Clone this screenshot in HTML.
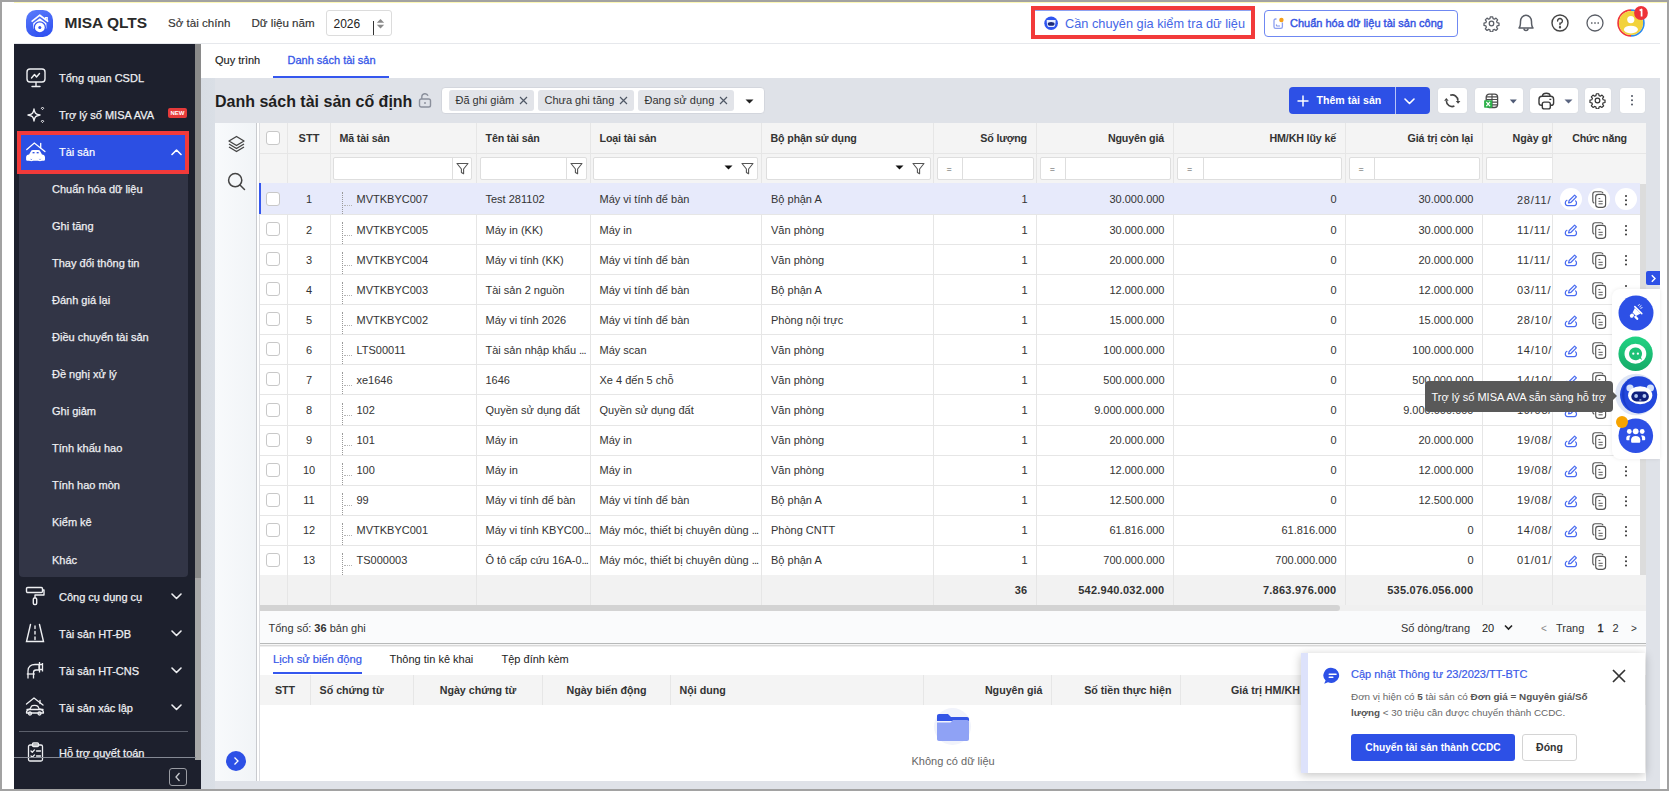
<!DOCTYPE html><html><head><meta charset="utf-8"><style>
*{box-sizing:border-box;margin:0;padding:0}
html,body{width:1669px;height:791px;overflow:hidden}
body{background:#a2a2a2;font-family:"Liberation Sans",sans-serif;font-size:11px;color:#333;position:relative}
.abs{position:absolute}
.t{position:absolute;white-space:nowrap;margin-top:1px}
svg{display:block}
</style></head><body>

<div class="abs" style="left:2px;top:2px;width:1665px;height:787px;background:#fff"></div>
<div class="abs" style="left:14px;top:2px;width:1653px;height:1px;background:#fcf7b5"></div>
<div class="abs" style="left:14px;top:43px;width:1646px;height:1px;background:#e6e8ec"></div>
<div class="abs" style="left:26px;top:10px;width:27px;height:27px;border-radius:10px;background:linear-gradient(160deg,#5a7cfb,#2b4cf0)">
<svg width="27" height="27" viewBox="0 0 27 27"><path d="M5.6 11.6 L13.8 5.2 L22.2 11.6" stroke="#fff" stroke-width="1.7" fill="none" stroke-linejoin="round"/><path d="M19.5 9.3 V7.6 H21.2 V10.8" stroke="#fff" stroke-width="1.3" fill="none"/>
<path d="M7.2 18.5 V13.2 L13.8 8.2 L20.4 13.2 V18.5 Z" fill="#fff"/><circle cx="13.8" cy="17.4" r="6.2" fill="#3453f2"/><circle cx="13.8" cy="17.4" r="4.9" fill="#fff"/><circle cx="13.8" cy="17.4" r="1.5" fill="#3453f2"/></svg></div>
<div class="t" style="left:64.5px;top:12.7px;font-size:15.5px;font-weight:700;color:#2a2a2a;line-height:18px">MISA QLTS</div>
<div class="t" style="left:168px;top:14px;font-size:11.6px;color:#333;line-height:16px;-webkit-text-stroke:0.15px #333">Sở tài chính</div>
<div class="t" style="left:251.5px;top:14px;font-size:11.6px;color:#333;line-height:16px;-webkit-text-stroke:0.15px #333">Dữ liệu năm</div>
<div class="abs" style="left:326px;top:10px;width:66px;height:26px;border:1px solid #dcdcdc;border-radius:3px"></div>
<div class="t" style="left:333.5px;top:15px;font-size:12px;color:#222;line-height:16px">2026</div>
<div class="abs" style="left:373px;top:21px;width:1px;height:14px;background:#333"></div>
<svg class="abs" style="left:375.5px;top:17.5px" width="9" height="12" viewBox="0 0 9 12"><path d="M0.8 4.8 L4.5 1 L8.2 4.8Z" fill="#8a8a8a"/><path d="M0.8 6.8 L4.5 10.6 L8.2 6.8Z" fill="#8a8a8a"/></svg>
<div class="abs" style="left:1031px;top:6px;width:224px;height:33px;border:4px solid #f23a3a"></div>
<div class="abs" style="left:1035px;top:10px;width:216px;height:1px;background:#8ea2f2"></div>
<svg class="abs" style="left:1043.5px;top:16px" width="15" height="15" viewBox="0 0 15 15"><circle cx="7.1" cy="7.3" r="6.8" fill="#2f55f0"/><path d="M2.7 3.9 H11.6 C11.6 6.6 11.4 10 9.9 10.9 H4.4 C2.9 10 2.7 6.6 2.7 3.9Z" fill="#e6eeff"/><ellipse cx="7.15" cy="7.9" rx="3.4" ry="1.95" fill="#1c2a78"/></svg>
<div class="t" style="left:1065px;top:15px;font-size:12.75px;color:#4667e6;line-height:16px">Cần chuyên gia kiểm tra dữ liệu</div>
<div class="abs" style="left:1264px;top:10px;width:194px;height:27px;border:1px solid #6f88f2;border-radius:4px"></div>
<svg class="abs" style="left:1273px;top:17px" width="12" height="13" viewBox="0 0 12 13"><path d="M3.5 2 H2.6 C1.6 2 1 2.7 1 3.7 V9.8 C1 10.8 1.6 11.4 2.6 11.4 H7.8 C8.8 11.4 9.4 10.8 9.4 9.8 V5.5" fill="none" stroke="#8c9ff0" stroke-width="1.3"/><path d="M3.4 7.4 V9 H7" stroke="#7f93ec" stroke-width="1" fill="none"/><circle cx="8.4" cy="3" r="2.2" fill="#f5a01a"/></svg>
<div class="t" style="left:1290px;top:15.4px;font-size:11px;color:#3453e2;line-height:14px;-webkit-text-stroke:0.4px #3453e2">Chuẩn hóa dữ liệu tài sản công</div>
<svg class="abs" style="left:1483px;top:14.7px" width="17" height="17" viewBox="0 0 24 24" fill="none" stroke="#5a5e66" stroke-width="1.75" stroke-linejoin="round"><path d="M10.3 2.5h3.4l.5 2.6 1.9.8 2.2-1.5 2.4 2.4-1.5 2.2.8 1.9 2.6.5v3.4l-2.6.5-.8 1.9 1.5 2.2-2.4 2.4-2.2-1.5-1.9.8-.5 2.6h-3.4l-.5-2.6-1.9-.8-2.2 1.5-2.4-2.4 1.5-2.2-.8-1.9-2.6-.5v-3.4l2.6-.5.8-1.9-1.5-2.2 2.4-2.4 2.2 1.5 1.9-.8z"/><circle cx="12" cy="12" r="3.2"/></svg>
<svg class="abs" style="left:1517px;top:13.3px" width="18" height="19" viewBox="0 0 18 19" fill="none" stroke="#5a5e66" stroke-width="1.5" stroke-linejoin="round"><path d="M2 15 C3.5 13.5 3.5 12 3.5 8.5 C3.5 4.8 6 2.2 9 2.2 C12 2.2 14.5 4.8 14.5 8.5 C14.5 12 14.5 13.5 16 15 Z"/><path d="M7 15.5 A2 2 0 0 0 11 15.5"/></svg>
<svg class="abs" style="left:1551px;top:14.2px" width="18" height="18" viewBox="0 0 18 18" fill="none" stroke="#444" stroke-width="1.4"><circle cx="9" cy="9" r="8"/><path d="M6.6 7 A2.4 2.4 0 1 1 9 9.3 L9 10.8" stroke-linecap="round"/><circle cx="9" cy="13.2" r="0.5" fill="#444"/></svg>
<svg class="abs" style="left:1585.5px;top:14.2px" width="18" height="18" viewBox="0 0 18 18" fill="none" stroke="#5a5e66" stroke-width="1.3"><circle cx="9" cy="9" r="8"/><circle cx="5.8" cy="9" r="0.5" fill="#5a5e66" stroke-width="0.8"/><circle cx="9" cy="9" r="0.5" fill="#5a5e66" stroke-width="0.8"/><circle cx="12.2" cy="9" r="0.5" fill="#5a5e66" stroke-width="0.8"/></svg>
<svg class="abs" style="left:1615.7px;top:8.3px" width="30" height="30" viewBox="0 0 30 30"><path d="M15 2.1 A12.9 12.9 0 0 0 15 27.9" stroke="#f0353b" stroke-width="1.7" fill="none"/><path d="M15 2.1 A12.9 12.9 0 0 1 15 27.9" stroke="#2b8af0" stroke-width="1.7" fill="none"/><circle cx="15" cy="15" r="12.1" fill="#f2d23c"/><circle cx="14.8" cy="11.6" r="3.6" fill="#fff"/><ellipse cx="14.9" cy="21.6" rx="7" ry="3.9" fill="#fff"/></svg>
<svg class="abs" style="left:1634.2px;top:6px" width="14" height="14" viewBox="0 0 14 14"><circle cx="7" cy="7" r="6.9" fill="#ee3238"/><path d="M5.6 4.6 L7.6 3.5 V10.6" stroke="#fff" stroke-width="1.7" fill="none" stroke-linejoin="round"/></svg>
<div class="abs" style="left:14px;top:44px;width:187px;height:745px;background:#1d202d"></div>
<div class="abs" style="left:195px;top:44px;width:6px;height:534px;background:#8a8a8a"></div>
<div class="abs" style="left:195px;top:578px;width:6px;height:182px;background:#a9a9a9"></div>
<div class="abs" style="left:19px;top:170px;width:169px;height:407px;background:#323546;border-radius:0 0 4px 4px"></div>
<div class="abs" style="left:17px;top:131px;width:172px;height:43px;border:4px solid #f23a3a;background:#2c4fe3"></div>
<svg class="abs" style="left:26px;top:68px" width="20" height="20" viewBox="0 0 20 20" fill="none" stroke="#eeeff2" stroke-width="1.4" stroke-linecap="round" stroke-linejoin="round"><rect x="1" y="1" width="18" height="13" rx="3"/><path d="M5.5 10 L8.5 6.5 L10.5 9 L13.5 5.5"/><path d="M10 14.5 V18 M6 18.5 H14"/></svg>
<div class="t" style="left:59px;top:70px;font-size:11px;color:#eeeff2;line-height:15px;-webkit-text-stroke:0.25px #eeeff2">Tổng quan CSDL</div>
<svg class="abs" style="left:26px;top:105px" width="20" height="20" viewBox="0 0 20 20" fill="none" stroke="#eeeff2" stroke-width="1.4" stroke-linejoin="round"><path d="M8 4 C8.6 8 9.5 9.2 14 10 C9.5 10.8 8.6 12 8 16 C7.4 12 6.5 10.8 2 10 C6.5 9.2 7.4 8 8 4Z"/><path d="M16.5 2 l1.2 1.3 -1.2 1.3 -1.2 -1.3z" stroke-width="1"/><path d="M16.5 15 l1.2 1.3 -1.2 1.3 -1.2 -1.3z" stroke-width="1"/></svg>
<div class="t" style="left:59px;top:107px;font-size:11px;color:#eeeff2;line-height:15px;-webkit-text-stroke:0.25px #eeeff2">Trợ lý số MISA AVA</div>
<div class="abs" style="left:168px;top:108px;width:19px;height:10px;background:#e53a3a;border-radius:2px;color:#fff;font-size:6px;font-weight:700;text-align:center;line-height:10px">NEW</div>
<svg class="abs" style="left:26px;top:142px" width="20" height="20" viewBox="0 0 20 20" fill="none" stroke="#fff" stroke-width="1.3" stroke-linecap="round"><path d="M0.8 7.5 L8.3 1 L18.9 9.6"/><path d="M14.7 1.4 V5.8"/><path d="M1 18.7 C0.4 18.7 0.1 18.1 0.1 17.3 V15.2 C0.1 13.4 1.3 12.6 3.1 12.4 L4.9 9.3 C5.4 8.5 6.1 8.1 7.1 8.1 H12 C13 8.1 13.7 8.5 14.2 9.3 L16 12.4 C17.8 12.6 19 13.4 19 15.2 V17.3 C19 18.1 18.7 18.7 18.1 18.7 Z" fill="#fff" stroke="none"/><rect x="5.9" y="9.4" width="3.3" height="2.6" fill="#2c4fe3"/><rect x="10" y="9.4" width="3.3" height="2.6" fill="#2c4fe3"/><ellipse cx="5.3" cy="17.6" rx="1.5" ry="1" fill="#2c4fe3"/><ellipse cx="14" cy="17.6" rx="1.5" ry="1" fill="#2c4fe3"/></svg>
<div class="t" style="left:59px;top:144px;font-size:11px;color:#fff;line-height:15px;-webkit-text-stroke:0.2px #fff">Tài sản</div>
<svg class="abs" style="left:170.5px;top:148.5px" width="11" height="7" viewBox="0 0 11 7"><path d="M1 5.5 L5.5 1 L10 5.5" fill="none" stroke="#fff" stroke-width="1.6" stroke-linecap="round" stroke-linejoin="round"/></svg>
<div class="t" style="left:52px;top:180.5px;font-size:11px;color:#eeeff2;line-height:15px;-webkit-text-stroke:0.25px #eeeff2">Chuẩn hóa dữ liệu</div>
<div class="t" style="left:52px;top:217.6px;font-size:11px;color:#eeeff2;line-height:15px;-webkit-text-stroke:0.25px #eeeff2">Ghi tăng</div>
<div class="t" style="left:52px;top:254.7px;font-size:11px;color:#eeeff2;line-height:15px;-webkit-text-stroke:0.25px #eeeff2">Thay đổi thông tin</div>
<div class="t" style="left:52px;top:291.8px;font-size:11px;color:#eeeff2;line-height:15px;-webkit-text-stroke:0.25px #eeeff2">Đánh giá lại</div>
<div class="t" style="left:52px;top:328.9px;font-size:11px;color:#eeeff2;line-height:15px;-webkit-text-stroke:0.25px #eeeff2">Điều chuyển tài sản</div>
<div class="t" style="left:52px;top:366.0px;font-size:11px;color:#eeeff2;line-height:15px;-webkit-text-stroke:0.25px #eeeff2">Đề nghị xử lý</div>
<div class="t" style="left:52px;top:403.1px;font-size:11px;color:#eeeff2;line-height:15px;-webkit-text-stroke:0.25px #eeeff2">Ghi giảm</div>
<div class="t" style="left:52px;top:440.2px;font-size:11px;color:#eeeff2;line-height:15px;-webkit-text-stroke:0.25px #eeeff2">Tính khấu hao</div>
<div class="t" style="left:52px;top:477.3px;font-size:11px;color:#eeeff2;line-height:15px;-webkit-text-stroke:0.25px #eeeff2">Tính hao mòn</div>
<div class="t" style="left:52px;top:514.4px;font-size:11px;color:#eeeff2;line-height:15px;-webkit-text-stroke:0.25px #eeeff2">Kiểm kê</div>
<div class="t" style="left:52px;top:551.5px;font-size:11px;color:#eeeff2;line-height:15px;-webkit-text-stroke:0.25px #eeeff2">Khác</div>
<svg class="abs" style="left:25px;top:586px" width="20" height="20" viewBox="0 0 20 20" fill="none" stroke="#eeeff2" stroke-width="1.4" stroke-linejoin="round"><rect x="1.5" y="1.5" width="16" height="5" rx="1.2"/><path d="M17.5 4 H19 V9 H10 V12"/><rect x="8.3" y="12" width="3.4" height="6.5" rx="1.2"/></svg>
<div class="t" style="left:59px;top:588.5px;font-size:11px;color:#eeeff2;line-height:15px;-webkit-text-stroke:0.25px #eeeff2">Công cụ dụng cụ</div>
<svg class="abs" style="left:170.5px;top:593px" width="11" height="7" viewBox="0 0 11 7"><path d="M1 1 L5.5 5.5 L10 1" fill="none" stroke="#eeeff2" stroke-width="1.6" stroke-linecap="round" stroke-linejoin="round"/></svg>
<svg class="abs" style="left:25px;top:623px" width="20" height="20" viewBox="0 0 20 20" fill="none" stroke="#eeeff2" stroke-width="1.4" stroke-linecap="round"><path d="M5.5 1.5 L1.5 18.5 H18.5 L14.5 1.5"/><path d="M10 3 V5.5 M10 8.5 V11 M10 14 V16.5"/></svg>
<div class="t" style="left:59px;top:625.5px;font-size:11px;color:#eeeff2;line-height:15px;-webkit-text-stroke:0.25px #eeeff2">Tài sản HT-ĐB</div>
<svg class="abs" style="left:170.5px;top:630px" width="11" height="7" viewBox="0 0 11 7"><path d="M1 1 L5.5 5.5 L10 1" fill="none" stroke="#eeeff2" stroke-width="1.6" stroke-linecap="round" stroke-linejoin="round"/></svg>
<svg class="abs" style="left:25px;top:660px" width="20" height="20" viewBox="0 0 20 20" fill="none" stroke="#eeeff2" stroke-width="1.3" stroke-linejoin="round"><path d="M3 18.5 V11 C3 6.5 6 4.5 10 4.5 H14 V10 H11 C9.5 10 8.5 11 8.5 12.5 V18.5"/><path d="M14.5 2 V12.5 M17.5 3 V11.5 M14.5 4.5 H17.5 M14.5 9.5 H17.5"/><path d="M1.8 14 H9.8"/></svg>
<div class="t" style="left:59px;top:662.5px;font-size:11px;color:#eeeff2;line-height:15px;-webkit-text-stroke:0.25px #eeeff2">Tài sản HT-CNS</div>
<svg class="abs" style="left:170.5px;top:667px" width="11" height="7" viewBox="0 0 11 7"><path d="M1 1 L5.5 5.5 L10 1" fill="none" stroke="#eeeff2" stroke-width="1.6" stroke-linecap="round" stroke-linejoin="round"/></svg>
<svg class="abs" style="left:25px;top:697px" width="20" height="20" viewBox="0 0 20 20" fill="none" stroke="#eeeff2" stroke-width="1.3" stroke-linecap="round" stroke-linejoin="round"><path d="M1.5 7 L9 1 L18 8"/><path d="M15 3.5 V6.5"/><path d="M1.5 16 C1.3 13.5 3 12.5 5 12 L6.5 9.2 C7 8.5 8 8.3 9.5 8.3 C11 8.3 12.2 8.5 13 9.5 L14.2 12 C17 12.3 18.5 13.5 18.5 16 Z"/><circle cx="5" cy="16.5" r="1.5"/><circle cx="14.5" cy="16.5" r="1.5"/><path d="M2 12.5 H18"/></svg>
<div class="t" style="left:59px;top:699.5px;font-size:11px;color:#eeeff2;line-height:15px;-webkit-text-stroke:0.25px #eeeff2">Tài sản xác lập</div>
<svg class="abs" style="left:170.5px;top:704px" width="11" height="7" viewBox="0 0 11 7"><path d="M1 1 L5.5 5.5 L10 1" fill="none" stroke="#eeeff2" stroke-width="1.6" stroke-linecap="round" stroke-linejoin="round"/></svg>
<div class="abs" style="left:19px;top:731px;width:169px;height:1px;background:#5b5f6b"></div>
<svg class="abs" style="left:25.5px;top:742px" width="20" height="20" viewBox="0 0 20 20" fill="none" stroke="#eeeff2" stroke-width="1.3" stroke-linecap="round" stroke-linejoin="round"><rect x="2.5" y="3" width="14" height="16" rx="1.5"/><rect x="6.5" y="1" width="6" height="3.5" rx="1"/><path d="M5 9 l1.3 1.3 2.2-2.4 M10.5 9 H14.5 M5 14 l1.3 1.3 2.2-2.4 M10.5 14 H14.5"/></svg>
<div class="t" style="left:59px;top:744.5px;font-size:11px;color:#eeeff2;line-height:15px;-webkit-text-stroke:0.25px #eeeff2">Hỗ trợ quyết toán</div>
<div class="abs" style="left:14px;top:757px;width:182px;height:1px;background:#858994"></div>
<div class="abs" style="left:169px;top:768px;width:18px;height:18px;border:1px solid #9a9ca3;border-radius:3px"></div>
<svg class="abs" style="left:174px;top:772px" width="8" height="10" viewBox="0 0 8 10"><path d="M5.5 1 L2 5 L5.5 9" fill="none" stroke="#c8c9ce" stroke-width="1.3"/></svg>
<div class="abs" style="left:201px;top:78px;width:1459px;height:711px;background:#dfe2e8"></div>
<div class="abs" style="left:201px;top:78px;width:14px;height:711px;background:linear-gradient(90deg,#d8dde4,#dadfe6)"></div>
<div class="t" style="left:215px;top:52px;font-size:11px;color:#222;line-height:15px;-webkit-text-stroke:0.15px #222">Quy trình</div>
<div class="t" style="left:287.5px;top:52px;font-size:11px;color:#3656e8;line-height:15px;-webkit-text-stroke:0.3px #3656e8">Danh sách tài sản</div>
<div class="abs" style="left:273px;top:76px;width:116px;height:2px;background:#3557ee"></div>
<div class="t" style="left:215px;top:91px;font-size:16px;font-weight:700;color:#1f1f1f;line-height:19px">Danh sách tài sản cố định</div>
<svg class="abs" style="left:418px;top:92px" width="14" height="16" viewBox="0 0 14 16" fill="none" stroke="#8b909c" stroke-width="1.4"><rect x="1.5" y="7" width="11" height="8" rx="1.8"/><path d="M3.8 7 V4.8 A3.2 3.2 0 0 1 10 3.8"/><path d="M7 10 V12"/></svg>
<div class="abs" style="left:441px;top:87px;width:324px;height:27px;background:#fff;border:1px solid #d3d6dd;border-radius:4px"></div>
<div class="abs" style="left:449px;top:90px;width:85px;height:21px;background:#e2e4e9;border-radius:3px"></div>
<div class="t" style="left:455.5px;top:92px;font-size:11px;color:#333;line-height:15px">Đã ghi giảm</div>
<svg class="abs" style="left:518.7px;top:96px" width="9" height="9" viewBox="0 0 9 9"><path d="M1 1 L8 8 M8 1 L1 8" stroke="#505866" stroke-width="1.2"/></svg>
<div class="abs" style="left:538px;top:90px;width:96px;height:21px;background:#e2e4e9;border-radius:3px"></div>
<div class="t" style="left:544.5px;top:92px;font-size:11px;color:#333;line-height:15px">Chưa ghi tăng</div>
<svg class="abs" style="left:618.7px;top:96px" width="9" height="9" viewBox="0 0 9 9"><path d="M1 1 L8 8 M8 1 L1 8" stroke="#505866" stroke-width="1.2"/></svg>
<div class="abs" style="left:638px;top:90px;width:96px;height:21px;background:#e2e4e9;border-radius:3px"></div>
<div class="t" style="left:644.5px;top:92px;font-size:11px;color:#333;line-height:15px">Đang sử dụng</div>
<svg class="abs" style="left:718.7px;top:96px" width="9" height="9" viewBox="0 0 9 9"><path d="M1 1 L8 8 M8 1 L1 8" stroke="#505866" stroke-width="1.2"/></svg>
<svg class="abs" style="left:744.5px;top:99px" width="9" height="5" viewBox="0 0 9 5"><path d="M0.5 0.5 H8.5 L4.5 4.5Z" fill="#222"/></svg>
<div class="abs" style="left:1289px;top:87px;width:141px;height:27px;background:#2d50e6;border-radius:4px"></div>
<div class="abs" style="left:1395px;top:87px;width:1px;height:27px;background:#b8c4f7"></div>
<svg class="abs" style="left:1297px;top:94.5px" width="12" height="12" viewBox="0 0 12 12"><path d="M6 0.5 V11.5 M0.5 6 H11.5" stroke="#fff" stroke-width="1.5"/></svg>
<div class="t" style="left:1316.5px;top:92px;font-size:10.6px;font-weight:700;color:#fff;line-height:15px">Thêm tài sản</div>
<svg class="abs" style="left:1403.5px;top:98px" width="11" height="7" viewBox="0 0 11 7"><path d="M1 1 L5.5 5.5 L10 1" fill="none" stroke="#fff" stroke-width="1.6" stroke-linecap="round" stroke-linejoin="round"/></svg>
<div class="abs" style="left:1438px;top:88px;width:29px;height:25px;background:#fff;border-radius:3px;box-shadow:0 0 1px rgba(0,0,0,0.12)"></div>
<div class="abs" style="left:1475px;top:88px;width:48px;height:25px;background:#fff;border-radius:3px;box-shadow:0 0 1px rgba(0,0,0,0.12)"></div>
<div class="abs" style="left:1530px;top:88px;width:48px;height:25px;background:#fff;border-radius:3px;box-shadow:0 0 1px rgba(0,0,0,0.12)"></div>
<div class="abs" style="left:1585px;top:88px;width:26px;height:25px;background:#fff;border-radius:3px;box-shadow:0 0 1px rgba(0,0,0,0.12)"></div>
<div class="abs" style="left:1620px;top:88px;width:25px;height:25px;background:#fff;border-radius:3px;box-shadow:0 0 1px rgba(0,0,0,0.12)"></div>
<svg class="abs" style="left:1441px;top:91px" width="22" height="20" viewBox="0 0 22 20" fill="none" stroke="#444" stroke-width="1.6"><path d="M9.2 4.3 A5.7 5.7 0 0 1 16.9 9.8"/><path d="M14.8 10 H19.4 L17.1 12.8Z" fill="#444" stroke="none"/><path d="M13.4 15.1 A5.7 5.7 0 0 1 5.4 9.9"/><path d="M3.1 9.8 H7.6 L5.35 7Z" fill="#444" stroke="none"/></svg>
<svg class="abs" style="left:1483px;top:93px" width="16" height="16" viewBox="0 0 16 16"><rect x="3.2" y="1.1" width="11.4" height="13.4" rx="3" fill="none" stroke="#4a4a4a" stroke-width="1.3"/><path d="M3.2 3.9 H14.6 M3.2 6.5 H14.6 M3.2 9.1 H14.6 M3.2 11.9 H14.6 M9 1.1 V14.5" stroke="#4a4a4a" stroke-width="1.1"/><rect x="1.1" y="7.2" width="8.1" height="7.5" rx="0.6" fill="#2db24a"/><path d="M3.3 8.8 L7 13.2 M7 8.8 L3.3 13.2" stroke="#fff" stroke-width="1.2"/></svg>
<svg class="abs" style="left:1508.6px;top:98.6px" width="9" height="5" viewBox="0 0 9 5"><path d="M0.8 0.6 H7.8 L4.3 4.4Z" fill="#4f5a75"/></svg>
<svg class="abs" style="left:1537.5px;top:92px" width="17" height="18" viewBox="0 0 17 18" fill="none" stroke="#3a3a3a" stroke-width="1.4" stroke-linejoin="round"><path d="M4.6 4.2 V3.6 C4.6 2 5.8 1.2 8.3 1.2 C10.8 1.2 12 2 12 3.6 V4.2"/><path d="M4 13.3 H3.4 C1.7 13.3 1 12.5 1 10.9 V7.3 C1 5.3 2 4.3 4 4.3 H12.6 C14.6 4.3 15.6 5.3 15.6 7.3 V10.9 C15.6 12.5 14.9 13.3 13.2 13.3 H12.6"/><rect x="4.3" y="10.1" width="8" height="6.8" rx="2" fill="#fff"/><path d="M11.4 7.4 H13.3" stroke-width="1.3"/></svg>
<svg class="abs" style="left:1563.5px;top:98.5px" width="9" height="5" viewBox="0 0 9 5"><path d="M0.5 0.5 H8.5 L4.5 4.5Z" fill="#5a6580"/></svg>
<svg class="abs" style="left:1589px;top:92px" width="17" height="17" viewBox="0 0 24 24" fill="none" stroke="#333" stroke-width="1.7" stroke-linejoin="round"><path d="M10.3 2.5h3.4l.5 2.6 1.9.8 2.2-1.5 2.4 2.4-1.5 2.2.8 1.9 2.6.5v3.4l-2.6.5-.8 1.9 1.5 2.2-2.4 2.4-2.2-1.5-1.9.8-.5 2.6h-3.4l-.5-2.6-1.9-.8-2.2 1.5-2.4-2.4 1.5-2.2-.8-1.9-2.6-.5v-3.4l2.6-.5.8-1.9-1.5-2.2 2.4-2.4 2.2 1.5 1.9-.8z"/><circle cx="12" cy="12" r="3.3"/></svg>
<svg class="abs" style="left:1630.4px;top:94.4px" width="4" height="13" viewBox="0 0 4 13" fill="#4d5360"><circle cx="2" cy="2" r="1"/><circle cx="2" cy="6.3" r="1"/><circle cx="2" cy="10.6" r="1"/></svg>
<div class="abs" style="left:215px;top:123px;width:1431px;height:658px;background:#fff"></div>
<div class="abs" style="left:215px;top:123px;width:41px;height:658px;background:linear-gradient(90deg,#f8fafc,#f1f4f7)"></div>
<div class="abs" style="left:256px;top:123px;width:1px;height:522px;background:#c9cbcf"></div>
<div class="abs" style="left:259px;top:123px;width:1px;height:522px;background:#dcdde0"></div>
<div class="abs" style="left:256px;top:645px;width:1px;height:136px;background:#c9cbcf"></div>
<div class="abs" style="left:259px;top:645px;width:1px;height:136px;background:#dcdde0"></div>
<svg class="abs" style="left:227px;top:135px" width="19" height="19" viewBox="0 0 19 19" fill="none" stroke="#444" stroke-width="1.4" stroke-linejoin="round"><path d="M9.5 1.5 L17 6 L9.5 10.5 L2 6Z"/><path d="M2 9 L9.5 13.5 L17 9"/><path d="M2 12 L9.5 16.5 L17 12"/></svg>
<svg class="abs" style="left:227px;top:172px" width="19" height="19" viewBox="0 0 19 19" fill="none" stroke="#444" stroke-width="1.5" stroke-linecap="round"><circle cx="8.2" cy="8.2" r="6.6"/><path d="M13 13 L17.5 17.5"/></svg>
<div class="abs" style="left:260px;top:123px;width:1386px;height:61px;background:#f4f4f4"></div>
<div class="abs" style="left:260px;top:153px;width:1386px;height:1px;background:#e6e6e6"></div>
<div class="abs" style="left:287px;top:123px;width:1px;height:482px;background:#e6e6e6"></div>
<div class="abs" style="left:266px;top:131px;width:14px;height:14px;border:1px solid #c8c8c8;border-radius:3px;background:#fff"></div>
<div class="abs" style="left:330px;top:123px;width:1px;height:482px;background:#e6e6e6"></div>
<div class="t" style="left:288px;width:42px;top:130px;text-align:center;font-size:11px;font-weight:700;color:#333;line-height:15px">STT</div>
<div class="abs" style="left:476px;top:123px;width:1px;height:482px;background:#e6e6e6"></div>
<div class="t" style="left:339.5px;top:130px;font-size:10.7px;font-weight:700;color:#333;line-height:15px;letter-spacing:-0.15px">Mã tài sản</div>
<div class="abs" style="left:590px;top:123px;width:1px;height:482px;background:#e6e6e6"></div>
<div class="t" style="left:485.5px;top:130px;font-size:10.7px;font-weight:700;color:#333;line-height:15px;letter-spacing:-0.15px">Tên tài sản</div>
<div class="abs" style="left:761px;top:123px;width:1px;height:482px;background:#e6e6e6"></div>
<div class="t" style="left:599.5px;top:130px;font-size:10.7px;font-weight:700;color:#333;line-height:15px;letter-spacing:-0.15px">Loại tài sản</div>
<div class="abs" style="left:933px;top:123px;width:1px;height:482px;background:#e6e6e6"></div>
<div class="t" style="left:770.5px;top:130px;font-size:10.7px;font-weight:700;color:#333;line-height:15px;letter-spacing:-0.15px">Bộ phận sử dụng</div>
<div class="abs" style="left:1036px;top:123px;width:1px;height:482px;background:#e6e6e6"></div>
<div class="t" style="left:934px;width:93px;top:130px;text-align:right;font-size:10.7px;font-weight:700;color:#333;line-height:15px;letter-spacing:-0.15px">Số lượng</div>
<div class="abs" style="left:1173px;top:123px;width:1px;height:482px;background:#e6e6e6"></div>
<div class="t" style="left:1037px;width:127px;top:130px;text-align:right;font-size:10.7px;font-weight:700;color:#333;line-height:15px;letter-spacing:-0.15px">Nguyên giá</div>
<div class="abs" style="left:1345px;top:123px;width:1px;height:482px;background:#e6e6e6"></div>
<div class="t" style="left:1174px;width:162px;top:130px;text-align:right;font-size:10.7px;font-weight:700;color:#333;line-height:15px;letter-spacing:-0.15px">HM/KH lũy kế</div>
<div class="abs" style="left:1482px;top:123px;width:1px;height:482px;background:#e6e6e6"></div>
<div class="t" style="left:1346px;width:127px;top:130px;text-align:right;font-size:10.7px;font-weight:700;color:#333;line-height:15px;letter-spacing:-0.15px">Giá trị còn lại</div>
<div class="abs" style="left:1552px;top:123px;width:1px;height:482px;background:#e6e6e6"></div>
<div class="abs" style="left:1483px;top:123px;width:69px;height:30px;overflow:hidden"><div class="t" style="left:29.5px;top:7px;font-size:10.7px;font-weight:700;color:#333;line-height:15px">Ngày ghi tăng</div></div>
<div class="abs" style="left:1552px;top:123px;width:1px;height:482px;background:#e6e6e6"></div>
<div class="t" style="left:1553px;width:93px;top:130px;text-align:center;font-size:10.7px;font-weight:700;color:#333;line-height:15px;letter-spacing:-0.2px">Chức năng</div>
<div class="abs" style="left:333px;top:157px;width:139px;height:23px;background:#fff;border:1px solid #dedede;border-radius:2px"></div>
<div class="abs" style="left:452px;top:157px;width:1px;height:23px;background:#dedede"></div>
<svg class="abs" style="left:456px;top:162px" width="13" height="13" viewBox="0 0 13 13"><path d="M1 1.5 H12 L7.6 7 V11.8 L5.4 10.5 V7Z" fill="none" stroke="#555" stroke-width="1.1" stroke-linejoin="round"/></svg>
<div class="abs" style="left:479.5px;top:157px;width:107px;height:23px;background:#fff;border:1px solid #dedede;border-radius:2px"></div>
<div class="abs" style="left:566px;top:157px;width:1px;height:23px;background:#dedede"></div>
<svg class="abs" style="left:570px;top:162px" width="13" height="13" viewBox="0 0 13 13"><path d="M1 1.5 H12 L7.6 7 V11.8 L5.4 10.5 V7Z" fill="none" stroke="#555" stroke-width="1.1" stroke-linejoin="round"/></svg>
<div class="abs" style="left:593px;top:157px;width:165px;height:23px;background:#fff;border:1px solid #dedede;border-radius:2px"></div>
<svg class="abs" style="left:723.5px;top:164.5px" width="9" height="5" viewBox="0 0 9 5"><path d="M0.5 0.5 H8.5 L4.5 4.5Z" fill="#111"/></svg>
<svg class="abs" style="left:740.5px;top:162px" width="13" height="13" viewBox="0 0 13 13"><path d="M1 1.5 H12 L7.6 7 V11.8 L5.4 10.5 V7Z" fill="none" stroke="#555" stroke-width="1.1" stroke-linejoin="round"/></svg>
<div class="abs" style="left:765.5px;top:157px;width:165px;height:23px;background:#fff;border:1px solid #dedede;border-radius:2px"></div>
<svg class="abs" style="left:895px;top:164.5px" width="9" height="5" viewBox="0 0 9 5"><path d="M0.5 0.5 H8.5 L4.5 4.5Z" fill="#111"/></svg>
<svg class="abs" style="left:912px;top:162px" width="13" height="13" viewBox="0 0 13 13"><path d="M1 1.5 H12 L7.6 7 V11.8 L5.4 10.5 V7Z" fill="none" stroke="#555" stroke-width="1.1" stroke-linejoin="round"/></svg>
<div class="abs" style="left:936.5px;top:157px;width:97px;height:23px;background:#fff;border:1px solid #dedede;border-radius:2px"></div>
<div class="abs" style="left:962px;top:157px;width:1px;height:23px;background:#dedede"></div>
<div class="t" style="left:936.5px;width:25.5px;top:161px;text-align:center;font-size:9px;color:#555;line-height:14px">=</div>
<div class="abs" style="left:1040px;top:157px;width:131px;height:23px;background:#fff;border:1px solid #dedede;border-radius:2px"></div>
<div class="abs" style="left:1065px;top:157px;width:1px;height:23px;background:#dedede"></div>
<div class="t" style="left:1040px;width:25px;top:161px;text-align:center;font-size:9px;color:#555;line-height:14px">=</div>
<div class="abs" style="left:1177px;top:157px;width:165px;height:23px;background:#fff;border:1px solid #dedede;border-radius:2px"></div>
<div class="abs" style="left:1202.5px;top:157px;width:1px;height:23px;background:#dedede"></div>
<div class="t" style="left:1177px;width:25.5px;top:161px;text-align:center;font-size:9px;color:#555;line-height:14px">=</div>
<div class="abs" style="left:1348.5px;top:157px;width:131px;height:23px;background:#fff;border:1px solid #dedede;border-radius:2px"></div>
<div class="abs" style="left:1374px;top:157px;width:1px;height:23px;background:#dedede"></div>
<div class="t" style="left:1348.5px;width:25.5px;top:161px;text-align:center;font-size:9px;color:#555;line-height:14px">=</div>
<div class="abs" style="left:1486px;top:157px;width:66px;height:23px;background:#fff;border:1px solid #dedede;border-right:none;border-radius:2px 0 0 2px"></div>
<div class="abs" style="left:260px;top:183px;width:1380px;height:31px;background:#e7eafb"></div>
<div class="abs" style="left:259px;top:183px;width:2px;height:31px;background:#3557ee"></div>
<div class="abs" style="left:260px;top:214.0px;width:1380px;height:1px;background:#e6e6e6"></div>
<div class="abs" style="left:266px;top:191.6px;width:14px;height:14px;border:1px solid #c8c8c8;border-radius:3px;background:#fff"></div>
<div class="t" style="left:288px;width:42px;top:191.1px;text-align:center;font-size:11px;color:#333;line-height:15px">1</div>
<div class="abs" style="left:342px;top:192.0px;width:1px;height:22px;border-left:1px dotted #999"></div>
<div class="abs" style="left:344px;top:204.5px;width:8px;height:1px;border-top:1px dotted #b4b4b4"></div>
<div class="t" style="left:356.5px;top:191.1px;font-size:11px;color:#333;line-height:15px">MVTKBYC007</div>
<div class="t" style="left:485.5px;top:191.1px;font-size:11px;color:#333;line-height:15px">Test 281102</div>
<div class="t" style="left:599.5px;top:191.1px;font-size:11px;color:#333;line-height:15px">Máy vi tính để bàn</div>
<div class="t" style="left:771px;top:191.1px;font-size:11px;color:#333;line-height:15px">Bộ phận A</div>
<div class="t" style="left:934px;width:93.5px;text-align:right;top:191.1px;font-size:11px;color:#333;line-height:15px">1</div>
<div class="t" style="left:1037px;width:127.5px;text-align:right;top:191.1px;font-size:11px;color:#333;line-height:15px">30.000.000</div>
<div class="t" style="left:1174px;width:162.5px;text-align:right;top:191.1px;font-size:11px;color:#333;line-height:15px">0</div>
<div class="t" style="left:1346px;width:127.5px;text-align:right;top:191.1px;font-size:11px;color:#333;line-height:15px">30.000.000</div>
<div class="abs" style="left:1483px;top:184.0px;width:69px;height:30px;overflow:hidden"><div class="t" style="left:34px;top:7.5px;font-size:11px;color:#333;line-height:15px;letter-spacing:0.75px">28/11/</div></div>
<div class="abs" style="left:1559.5px;top:187.6px;width:22px;height:22px;border-radius:11px;background:#fff"></div>
<div class="abs" style="left:1587.5px;top:187.6px;width:22px;height:22px;border-radius:11px;background:#fff"></div>
<div class="abs" style="left:1614.5px;top:187.6px;width:22px;height:22px;border-radius:11px;background:#fff"></div>
<svg class="abs" style="left:1564px;top:192.79999999999998px" width="14" height="14" viewBox="0 0 14 14" fill="none" stroke="#4a6cf0" stroke-width="1.25" stroke-linejoin="round" stroke-linecap="round"><path d="M2.9 7.3 C1.7 7.9 1.3 8.7 1.3 10 C1.3 11.7 2.1 12.5 3.7 12.5 H10.3 C11.9 12.5 12.5 11.7 12.5 10 C12.5 8.9 12.2 8.3 11.6 7.9"/><path d="M4.6 9.9 L5.2 7.5 L10.6 2.1 L12.4 3.9 L7 9.3 Z"/></svg>
<svg class="abs" style="left:1591.5px;top:191.29999999999998px" width="15" height="17" viewBox="0 0 15 17" fill="none" stroke="#555" stroke-width="1.15"><path d="M2.3 12.3 C1.4 11.9 0.8 11.1 0.8 10 V3.2 C0.8 1.7 1.8 0.7 3.3 0.7 H8.8 C9.9 0.7 10.7 1.3 11.1 2.3"/><rect x="3.7" y="3.3" width="9.9" height="13" rx="2.7"/><path d="M6.5 7.6 H8.3 M6.5 10.3 H10.7 M6.5 12.8 H10.7" stroke-width="1"/></svg>
<svg class="abs" style="left:1623.5px;top:193.6px" width="4" height="13" viewBox="0 0 4 13" fill="#333"><circle cx="2" cy="2" r="1"/><circle cx="2" cy="6.3" r="1"/><circle cx="2" cy="10.6" r="1"/></svg>
<div class="abs" style="left:260px;top:244.08px;width:1380px;height:1px;background:#e6e6e6"></div>
<div class="abs" style="left:266px;top:222.08px;width:14px;height:14px;border:1px solid #c8c8c8;border-radius:3px;background:#fff"></div>
<div class="t" style="left:288px;width:42px;top:221.58px;text-align:center;font-size:11px;color:#333;line-height:15px">2</div>
<div class="abs" style="left:342px;top:222.08px;width:1px;height:22px;border-left:1px dotted #999"></div>
<div class="abs" style="left:344px;top:234.58px;width:8px;height:1px;border-top:1px dotted #b4b4b4"></div>
<div class="t" style="left:356.5px;top:221.58px;font-size:11px;color:#333;line-height:15px">MVTKBYC005</div>
<div class="t" style="left:485.5px;top:221.58px;font-size:11px;color:#333;line-height:15px">Máy in (KK)</div>
<div class="t" style="left:599.5px;top:221.58px;font-size:11px;color:#333;line-height:15px">Máy in</div>
<div class="t" style="left:771px;top:221.58px;font-size:11px;color:#333;line-height:15px">Văn phòng</div>
<div class="t" style="left:934px;width:93.5px;text-align:right;top:221.58px;font-size:11px;color:#333;line-height:15px">1</div>
<div class="t" style="left:1037px;width:127.5px;text-align:right;top:221.58px;font-size:11px;color:#333;line-height:15px">30.000.000</div>
<div class="t" style="left:1174px;width:162.5px;text-align:right;top:221.58px;font-size:11px;color:#333;line-height:15px">0</div>
<div class="t" style="left:1346px;width:127.5px;text-align:right;top:221.58px;font-size:11px;color:#333;line-height:15px">30.000.000</div>
<div class="abs" style="left:1483px;top:214.08px;width:69px;height:30px;overflow:hidden"><div class="t" style="left:34px;top:7.5px;font-size:11px;color:#333;line-height:15px;letter-spacing:0.75px">11/11/</div></div>
<svg class="abs" style="left:1564px;top:223.28px" width="14" height="14" viewBox="0 0 14 14" fill="none" stroke="#4a6cf0" stroke-width="1.25" stroke-linejoin="round" stroke-linecap="round"><path d="M2.9 7.3 C1.7 7.9 1.3 8.7 1.3 10 C1.3 11.7 2.1 12.5 3.7 12.5 H10.3 C11.9 12.5 12.5 11.7 12.5 10 C12.5 8.9 12.2 8.3 11.6 7.9"/><path d="M4.6 9.9 L5.2 7.5 L10.6 2.1 L12.4 3.9 L7 9.3 Z"/></svg>
<svg class="abs" style="left:1591.5px;top:221.78px" width="15" height="17" viewBox="0 0 15 17" fill="none" stroke="#555" stroke-width="1.15"><path d="M2.3 12.3 C1.4 11.9 0.8 11.1 0.8 10 V3.2 C0.8 1.7 1.8 0.7 3.3 0.7 H8.8 C9.9 0.7 10.7 1.3 11.1 2.3"/><rect x="3.7" y="3.3" width="9.9" height="13" rx="2.7"/><path d="M6.5 7.6 H8.3 M6.5 10.3 H10.7 M6.5 12.8 H10.7" stroke-width="1"/></svg>
<svg class="abs" style="left:1623.5px;top:224.08px" width="4" height="13" viewBox="0 0 4 13" fill="#333"><circle cx="2" cy="2" r="1"/><circle cx="2" cy="6.3" r="1"/><circle cx="2" cy="10.6" r="1"/></svg>
<div class="abs" style="left:260px;top:274.15999999999997px;width:1380px;height:1px;background:#e6e6e6"></div>
<div class="abs" style="left:266px;top:252.15999999999997px;width:14px;height:14px;border:1px solid #c8c8c8;border-radius:3px;background:#fff"></div>
<div class="t" style="left:288px;width:42px;top:251.65999999999997px;text-align:center;font-size:11px;color:#333;line-height:15px">3</div>
<div class="abs" style="left:342px;top:252.16px;width:1px;height:22px;border-left:1px dotted #999"></div>
<div class="abs" style="left:344px;top:264.65999999999997px;width:8px;height:1px;border-top:1px dotted #b4b4b4"></div>
<div class="t" style="left:356.5px;top:251.65999999999997px;font-size:11px;color:#333;line-height:15px">MVTKBYC004</div>
<div class="t" style="left:485.5px;top:251.65999999999997px;font-size:11px;color:#333;line-height:15px">Máy vi tính (KK)</div>
<div class="t" style="left:599.5px;top:251.65999999999997px;font-size:11px;color:#333;line-height:15px">Máy vi tính để bàn</div>
<div class="t" style="left:771px;top:251.65999999999997px;font-size:11px;color:#333;line-height:15px">Văn phòng</div>
<div class="t" style="left:934px;width:93.5px;text-align:right;top:251.65999999999997px;font-size:11px;color:#333;line-height:15px">1</div>
<div class="t" style="left:1037px;width:127.5px;text-align:right;top:251.65999999999997px;font-size:11px;color:#333;line-height:15px">20.000.000</div>
<div class="t" style="left:1174px;width:162.5px;text-align:right;top:251.65999999999997px;font-size:11px;color:#333;line-height:15px">0</div>
<div class="t" style="left:1346px;width:127.5px;text-align:right;top:251.65999999999997px;font-size:11px;color:#333;line-height:15px">20.000.000</div>
<div class="abs" style="left:1483px;top:244.16px;width:69px;height:30px;overflow:hidden"><div class="t" style="left:34px;top:7.5px;font-size:11px;color:#333;line-height:15px;letter-spacing:0.75px">11/11/</div></div>
<svg class="abs" style="left:1564px;top:253.35999999999996px" width="14" height="14" viewBox="0 0 14 14" fill="none" stroke="#4a6cf0" stroke-width="1.25" stroke-linejoin="round" stroke-linecap="round"><path d="M2.9 7.3 C1.7 7.9 1.3 8.7 1.3 10 C1.3 11.7 2.1 12.5 3.7 12.5 H10.3 C11.9 12.5 12.5 11.7 12.5 10 C12.5 8.9 12.2 8.3 11.6 7.9"/><path d="M4.6 9.9 L5.2 7.5 L10.6 2.1 L12.4 3.9 L7 9.3 Z"/></svg>
<svg class="abs" style="left:1591.5px;top:251.85999999999996px" width="15" height="17" viewBox="0 0 15 17" fill="none" stroke="#555" stroke-width="1.15"><path d="M2.3 12.3 C1.4 11.9 0.8 11.1 0.8 10 V3.2 C0.8 1.7 1.8 0.7 3.3 0.7 H8.8 C9.9 0.7 10.7 1.3 11.1 2.3"/><rect x="3.7" y="3.3" width="9.9" height="13" rx="2.7"/><path d="M6.5 7.6 H8.3 M6.5 10.3 H10.7 M6.5 12.8 H10.7" stroke-width="1"/></svg>
<svg class="abs" style="left:1623.5px;top:254.15999999999997px" width="4" height="13" viewBox="0 0 4 13" fill="#333"><circle cx="2" cy="2" r="1"/><circle cx="2" cy="6.3" r="1"/><circle cx="2" cy="10.6" r="1"/></svg>
<div class="abs" style="left:260px;top:304.24px;width:1380px;height:1px;background:#e6e6e6"></div>
<div class="abs" style="left:266px;top:282.24px;width:14px;height:14px;border:1px solid #c8c8c8;border-radius:3px;background:#fff"></div>
<div class="t" style="left:288px;width:42px;top:281.74px;text-align:center;font-size:11px;color:#333;line-height:15px">4</div>
<div class="abs" style="left:342px;top:282.24px;width:1px;height:22px;border-left:1px dotted #999"></div>
<div class="abs" style="left:344px;top:294.74px;width:8px;height:1px;border-top:1px dotted #b4b4b4"></div>
<div class="t" style="left:356.5px;top:281.74px;font-size:11px;color:#333;line-height:15px">MVTKBYC003</div>
<div class="t" style="left:485.5px;top:281.74px;font-size:11px;color:#333;line-height:15px">Tài sản 2 nguồn</div>
<div class="t" style="left:599.5px;top:281.74px;font-size:11px;color:#333;line-height:15px">Máy vi tính để bàn</div>
<div class="t" style="left:771px;top:281.74px;font-size:11px;color:#333;line-height:15px">Bộ phận A</div>
<div class="t" style="left:934px;width:93.5px;text-align:right;top:281.74px;font-size:11px;color:#333;line-height:15px">1</div>
<div class="t" style="left:1037px;width:127.5px;text-align:right;top:281.74px;font-size:11px;color:#333;line-height:15px">12.000.000</div>
<div class="t" style="left:1174px;width:162.5px;text-align:right;top:281.74px;font-size:11px;color:#333;line-height:15px">0</div>
<div class="t" style="left:1346px;width:127.5px;text-align:right;top:281.74px;font-size:11px;color:#333;line-height:15px">12.000.000</div>
<div class="abs" style="left:1483px;top:274.24px;width:69px;height:30px;overflow:hidden"><div class="t" style="left:34px;top:7.5px;font-size:11px;color:#333;line-height:15px;letter-spacing:0.75px">03/11/</div></div>
<svg class="abs" style="left:1564px;top:283.44px" width="14" height="14" viewBox="0 0 14 14" fill="none" stroke="#4a6cf0" stroke-width="1.25" stroke-linejoin="round" stroke-linecap="round"><path d="M2.9 7.3 C1.7 7.9 1.3 8.7 1.3 10 C1.3 11.7 2.1 12.5 3.7 12.5 H10.3 C11.9 12.5 12.5 11.7 12.5 10 C12.5 8.9 12.2 8.3 11.6 7.9"/><path d="M4.6 9.9 L5.2 7.5 L10.6 2.1 L12.4 3.9 L7 9.3 Z"/></svg>
<svg class="abs" style="left:1591.5px;top:281.94px" width="15" height="17" viewBox="0 0 15 17" fill="none" stroke="#555" stroke-width="1.15"><path d="M2.3 12.3 C1.4 11.9 0.8 11.1 0.8 10 V3.2 C0.8 1.7 1.8 0.7 3.3 0.7 H8.8 C9.9 0.7 10.7 1.3 11.1 2.3"/><rect x="3.7" y="3.3" width="9.9" height="13" rx="2.7"/><path d="M6.5 7.6 H8.3 M6.5 10.3 H10.7 M6.5 12.8 H10.7" stroke-width="1"/></svg>
<svg class="abs" style="left:1623.5px;top:284.24px" width="4" height="13" viewBox="0 0 4 13" fill="#333"><circle cx="2" cy="2" r="1"/><circle cx="2" cy="6.3" r="1"/><circle cx="2" cy="10.6" r="1"/></svg>
<div class="abs" style="left:260px;top:334.32px;width:1380px;height:1px;background:#e6e6e6"></div>
<div class="abs" style="left:266px;top:312.32px;width:14px;height:14px;border:1px solid #c8c8c8;border-radius:3px;background:#fff"></div>
<div class="t" style="left:288px;width:42px;top:311.82px;text-align:center;font-size:11px;color:#333;line-height:15px">5</div>
<div class="abs" style="left:342px;top:312.32px;width:1px;height:22px;border-left:1px dotted #999"></div>
<div class="abs" style="left:344px;top:324.82px;width:8px;height:1px;border-top:1px dotted #b4b4b4"></div>
<div class="t" style="left:356.5px;top:311.82px;font-size:11px;color:#333;line-height:15px">MVTKBYC002</div>
<div class="t" style="left:485.5px;top:311.82px;font-size:11px;color:#333;line-height:15px">Máy vi tính 2026</div>
<div class="t" style="left:599.5px;top:311.82px;font-size:11px;color:#333;line-height:15px">Máy vi tính để bàn</div>
<div class="t" style="left:771px;top:311.82px;font-size:11px;color:#333;line-height:15px">Phòng nội trực</div>
<div class="t" style="left:934px;width:93.5px;text-align:right;top:311.82px;font-size:11px;color:#333;line-height:15px">1</div>
<div class="t" style="left:1037px;width:127.5px;text-align:right;top:311.82px;font-size:11px;color:#333;line-height:15px">15.000.000</div>
<div class="t" style="left:1174px;width:162.5px;text-align:right;top:311.82px;font-size:11px;color:#333;line-height:15px">0</div>
<div class="t" style="left:1346px;width:127.5px;text-align:right;top:311.82px;font-size:11px;color:#333;line-height:15px">15.000.000</div>
<div class="abs" style="left:1483px;top:304.32px;width:69px;height:30px;overflow:hidden"><div class="t" style="left:34px;top:7.5px;font-size:11px;color:#333;line-height:15px;letter-spacing:0.75px">28/10/</div></div>
<svg class="abs" style="left:1564px;top:313.52px" width="14" height="14" viewBox="0 0 14 14" fill="none" stroke="#4a6cf0" stroke-width="1.25" stroke-linejoin="round" stroke-linecap="round"><path d="M2.9 7.3 C1.7 7.9 1.3 8.7 1.3 10 C1.3 11.7 2.1 12.5 3.7 12.5 H10.3 C11.9 12.5 12.5 11.7 12.5 10 C12.5 8.9 12.2 8.3 11.6 7.9"/><path d="M4.6 9.9 L5.2 7.5 L10.6 2.1 L12.4 3.9 L7 9.3 Z"/></svg>
<svg class="abs" style="left:1591.5px;top:312.02px" width="15" height="17" viewBox="0 0 15 17" fill="none" stroke="#555" stroke-width="1.15"><path d="M2.3 12.3 C1.4 11.9 0.8 11.1 0.8 10 V3.2 C0.8 1.7 1.8 0.7 3.3 0.7 H8.8 C9.9 0.7 10.7 1.3 11.1 2.3"/><rect x="3.7" y="3.3" width="9.9" height="13" rx="2.7"/><path d="M6.5 7.6 H8.3 M6.5 10.3 H10.7 M6.5 12.8 H10.7" stroke-width="1"/></svg>
<svg class="abs" style="left:1623.5px;top:314.32px" width="4" height="13" viewBox="0 0 4 13" fill="#333"><circle cx="2" cy="2" r="1"/><circle cx="2" cy="6.3" r="1"/><circle cx="2" cy="10.6" r="1"/></svg>
<div class="abs" style="left:260px;top:364.4px;width:1380px;height:1px;background:#e6e6e6"></div>
<div class="abs" style="left:266px;top:342.4px;width:14px;height:14px;border:1px solid #c8c8c8;border-radius:3px;background:#fff"></div>
<div class="t" style="left:288px;width:42px;top:341.9px;text-align:center;font-size:11px;color:#333;line-height:15px">6</div>
<div class="abs" style="left:342px;top:342.4px;width:1px;height:22px;border-left:1px dotted #999"></div>
<div class="abs" style="left:344px;top:354.9px;width:8px;height:1px;border-top:1px dotted #b4b4b4"></div>
<div class="t" style="left:356.5px;top:341.9px;font-size:11px;color:#333;line-height:15px">LTS00011</div>
<div class="t" style="left:485.5px;top:341.9px;font-size:11px;color:#333;line-height:15px">Tài sản nhập khẩu <span style="letter-spacing:-0.9px">...</span></div>
<div class="t" style="left:599.5px;top:341.9px;font-size:11px;color:#333;line-height:15px">Máy scan</div>
<div class="t" style="left:771px;top:341.9px;font-size:11px;color:#333;line-height:15px">Văn phòng</div>
<div class="t" style="left:934px;width:93.5px;text-align:right;top:341.9px;font-size:11px;color:#333;line-height:15px">1</div>
<div class="t" style="left:1037px;width:127.5px;text-align:right;top:341.9px;font-size:11px;color:#333;line-height:15px">100.000.000</div>
<div class="t" style="left:1174px;width:162.5px;text-align:right;top:341.9px;font-size:11px;color:#333;line-height:15px">0</div>
<div class="t" style="left:1346px;width:127.5px;text-align:right;top:341.9px;font-size:11px;color:#333;line-height:15px">100.000.000</div>
<div class="abs" style="left:1483px;top:334.4px;width:69px;height:30px;overflow:hidden"><div class="t" style="left:34px;top:7.5px;font-size:11px;color:#333;line-height:15px;letter-spacing:0.75px">14/10/</div></div>
<svg class="abs" style="left:1564px;top:343.59999999999997px" width="14" height="14" viewBox="0 0 14 14" fill="none" stroke="#4a6cf0" stroke-width="1.25" stroke-linejoin="round" stroke-linecap="round"><path d="M2.9 7.3 C1.7 7.9 1.3 8.7 1.3 10 C1.3 11.7 2.1 12.5 3.7 12.5 H10.3 C11.9 12.5 12.5 11.7 12.5 10 C12.5 8.9 12.2 8.3 11.6 7.9"/><path d="M4.6 9.9 L5.2 7.5 L10.6 2.1 L12.4 3.9 L7 9.3 Z"/></svg>
<svg class="abs" style="left:1591.5px;top:342.09999999999997px" width="15" height="17" viewBox="0 0 15 17" fill="none" stroke="#555" stroke-width="1.15"><path d="M2.3 12.3 C1.4 11.9 0.8 11.1 0.8 10 V3.2 C0.8 1.7 1.8 0.7 3.3 0.7 H8.8 C9.9 0.7 10.7 1.3 11.1 2.3"/><rect x="3.7" y="3.3" width="9.9" height="13" rx="2.7"/><path d="M6.5 7.6 H8.3 M6.5 10.3 H10.7 M6.5 12.8 H10.7" stroke-width="1"/></svg>
<svg class="abs" style="left:1623.5px;top:344.4px" width="4" height="13" viewBox="0 0 4 13" fill="#333"><circle cx="2" cy="2" r="1"/><circle cx="2" cy="6.3" r="1"/><circle cx="2" cy="10.6" r="1"/></svg>
<div class="abs" style="left:260px;top:394.48px;width:1380px;height:1px;background:#e6e6e6"></div>
<div class="abs" style="left:266px;top:372.48px;width:14px;height:14px;border:1px solid #c8c8c8;border-radius:3px;background:#fff"></div>
<div class="t" style="left:288px;width:42px;top:371.98px;text-align:center;font-size:11px;color:#333;line-height:15px">7</div>
<div class="abs" style="left:342px;top:372.48px;width:1px;height:22px;border-left:1px dotted #999"></div>
<div class="abs" style="left:344px;top:384.98px;width:8px;height:1px;border-top:1px dotted #b4b4b4"></div>
<div class="t" style="left:356.5px;top:371.98px;font-size:11px;color:#333;line-height:15px">xe1646</div>
<div class="t" style="left:485.5px;top:371.98px;font-size:11px;color:#333;line-height:15px">1646</div>
<div class="t" style="left:599.5px;top:371.98px;font-size:11px;color:#333;line-height:15px">Xe 4 đến 5 chỗ</div>
<div class="t" style="left:771px;top:371.98px;font-size:11px;color:#333;line-height:15px">Văn phòng</div>
<div class="t" style="left:934px;width:93.5px;text-align:right;top:371.98px;font-size:11px;color:#333;line-height:15px">1</div>
<div class="t" style="left:1037px;width:127.5px;text-align:right;top:371.98px;font-size:11px;color:#333;line-height:15px">500.000.000</div>
<div class="t" style="left:1174px;width:162.5px;text-align:right;top:371.98px;font-size:11px;color:#333;line-height:15px">0</div>
<div class="t" style="left:1346px;width:127.5px;text-align:right;top:371.98px;font-size:11px;color:#333;line-height:15px">500.000.000</div>
<div class="abs" style="left:1483px;top:364.48px;width:69px;height:30px;overflow:hidden"><div class="t" style="left:34px;top:7.5px;font-size:11px;color:#333;line-height:15px;letter-spacing:0.75px">14/10/</div></div>
<svg class="abs" style="left:1564px;top:373.68px" width="14" height="14" viewBox="0 0 14 14" fill="none" stroke="#4a6cf0" stroke-width="1.25" stroke-linejoin="round" stroke-linecap="round"><path d="M2.9 7.3 C1.7 7.9 1.3 8.7 1.3 10 C1.3 11.7 2.1 12.5 3.7 12.5 H10.3 C11.9 12.5 12.5 11.7 12.5 10 C12.5 8.9 12.2 8.3 11.6 7.9"/><path d="M4.6 9.9 L5.2 7.5 L10.6 2.1 L12.4 3.9 L7 9.3 Z"/></svg>
<svg class="abs" style="left:1591.5px;top:372.18px" width="15" height="17" viewBox="0 0 15 17" fill="none" stroke="#555" stroke-width="1.15"><path d="M2.3 12.3 C1.4 11.9 0.8 11.1 0.8 10 V3.2 C0.8 1.7 1.8 0.7 3.3 0.7 H8.8 C9.9 0.7 10.7 1.3 11.1 2.3"/><rect x="3.7" y="3.3" width="9.9" height="13" rx="2.7"/><path d="M6.5 7.6 H8.3 M6.5 10.3 H10.7 M6.5 12.8 H10.7" stroke-width="1"/></svg>
<svg class="abs" style="left:1623.5px;top:374.48px" width="4" height="13" viewBox="0 0 4 13" fill="#333"><circle cx="2" cy="2" r="1"/><circle cx="2" cy="6.3" r="1"/><circle cx="2" cy="10.6" r="1"/></svg>
<div class="abs" style="left:260px;top:424.56px;width:1380px;height:1px;background:#e6e6e6"></div>
<div class="abs" style="left:266px;top:402.56px;width:14px;height:14px;border:1px solid #c8c8c8;border-radius:3px;background:#fff"></div>
<div class="t" style="left:288px;width:42px;top:402.06px;text-align:center;font-size:11px;color:#333;line-height:15px">8</div>
<div class="abs" style="left:342px;top:402.56px;width:1px;height:22px;border-left:1px dotted #999"></div>
<div class="abs" style="left:344px;top:415.06px;width:8px;height:1px;border-top:1px dotted #b4b4b4"></div>
<div class="t" style="left:356.5px;top:402.06px;font-size:11px;color:#333;line-height:15px">102</div>
<div class="t" style="left:485.5px;top:402.06px;font-size:11px;color:#333;line-height:15px">Quyền sử dụng đất</div>
<div class="t" style="left:599.5px;top:402.06px;font-size:11px;color:#333;line-height:15px">Quyền sử dụng đất</div>
<div class="t" style="left:771px;top:402.06px;font-size:11px;color:#333;line-height:15px">Văn phòng</div>
<div class="t" style="left:934px;width:93.5px;text-align:right;top:402.06px;font-size:11px;color:#333;line-height:15px">1</div>
<div class="t" style="left:1037px;width:127.5px;text-align:right;top:402.06px;font-size:11px;color:#333;line-height:15px">9.000.000.000</div>
<div class="t" style="left:1174px;width:162.5px;text-align:right;top:402.06px;font-size:11px;color:#333;line-height:15px">0</div>
<div class="t" style="left:1346px;width:127.5px;text-align:right;top:402.06px;font-size:11px;color:#333;line-height:15px">9.000.000.000</div>
<div class="abs" style="left:1483px;top:394.56px;width:69px;height:30px;overflow:hidden"><div class="t" style="left:34px;top:7.5px;font-size:11px;color:#333;line-height:15px;letter-spacing:0.75px">19/08/</div></div>
<svg class="abs" style="left:1564px;top:403.76px" width="14" height="14" viewBox="0 0 14 14" fill="none" stroke="#4a6cf0" stroke-width="1.25" stroke-linejoin="round" stroke-linecap="round"><path d="M2.9 7.3 C1.7 7.9 1.3 8.7 1.3 10 C1.3 11.7 2.1 12.5 3.7 12.5 H10.3 C11.9 12.5 12.5 11.7 12.5 10 C12.5 8.9 12.2 8.3 11.6 7.9"/><path d="M4.6 9.9 L5.2 7.5 L10.6 2.1 L12.4 3.9 L7 9.3 Z"/></svg>
<svg class="abs" style="left:1591.5px;top:402.26px" width="15" height="17" viewBox="0 0 15 17" fill="none" stroke="#555" stroke-width="1.15"><path d="M2.3 12.3 C1.4 11.9 0.8 11.1 0.8 10 V3.2 C0.8 1.7 1.8 0.7 3.3 0.7 H8.8 C9.9 0.7 10.7 1.3 11.1 2.3"/><rect x="3.7" y="3.3" width="9.9" height="13" rx="2.7"/><path d="M6.5 7.6 H8.3 M6.5 10.3 H10.7 M6.5 12.8 H10.7" stroke-width="1"/></svg>
<svg class="abs" style="left:1623.5px;top:404.56px" width="4" height="13" viewBox="0 0 4 13" fill="#333"><circle cx="2" cy="2" r="1"/><circle cx="2" cy="6.3" r="1"/><circle cx="2" cy="10.6" r="1"/></svg>
<div class="abs" style="left:260px;top:454.64px;width:1380px;height:1px;background:#e6e6e6"></div>
<div class="abs" style="left:266px;top:432.64px;width:14px;height:14px;border:1px solid #c8c8c8;border-radius:3px;background:#fff"></div>
<div class="t" style="left:288px;width:42px;top:432.14px;text-align:center;font-size:11px;color:#333;line-height:15px">9</div>
<div class="abs" style="left:342px;top:432.64px;width:1px;height:22px;border-left:1px dotted #999"></div>
<div class="abs" style="left:344px;top:445.14px;width:8px;height:1px;border-top:1px dotted #b4b4b4"></div>
<div class="t" style="left:356.5px;top:432.14px;font-size:11px;color:#333;line-height:15px">101</div>
<div class="t" style="left:485.5px;top:432.14px;font-size:11px;color:#333;line-height:15px">Máy in</div>
<div class="t" style="left:599.5px;top:432.14px;font-size:11px;color:#333;line-height:15px">Máy in</div>
<div class="t" style="left:771px;top:432.14px;font-size:11px;color:#333;line-height:15px">Văn phòng</div>
<div class="t" style="left:934px;width:93.5px;text-align:right;top:432.14px;font-size:11px;color:#333;line-height:15px">1</div>
<div class="t" style="left:1037px;width:127.5px;text-align:right;top:432.14px;font-size:11px;color:#333;line-height:15px">20.000.000</div>
<div class="t" style="left:1174px;width:162.5px;text-align:right;top:432.14px;font-size:11px;color:#333;line-height:15px">0</div>
<div class="t" style="left:1346px;width:127.5px;text-align:right;top:432.14px;font-size:11px;color:#333;line-height:15px">20.000.000</div>
<div class="abs" style="left:1483px;top:424.64px;width:69px;height:30px;overflow:hidden"><div class="t" style="left:34px;top:7.5px;font-size:11px;color:#333;line-height:15px;letter-spacing:0.75px">19/08/</div></div>
<svg class="abs" style="left:1564px;top:433.84px" width="14" height="14" viewBox="0 0 14 14" fill="none" stroke="#4a6cf0" stroke-width="1.25" stroke-linejoin="round" stroke-linecap="round"><path d="M2.9 7.3 C1.7 7.9 1.3 8.7 1.3 10 C1.3 11.7 2.1 12.5 3.7 12.5 H10.3 C11.9 12.5 12.5 11.7 12.5 10 C12.5 8.9 12.2 8.3 11.6 7.9"/><path d="M4.6 9.9 L5.2 7.5 L10.6 2.1 L12.4 3.9 L7 9.3 Z"/></svg>
<svg class="abs" style="left:1591.5px;top:432.34px" width="15" height="17" viewBox="0 0 15 17" fill="none" stroke="#555" stroke-width="1.15"><path d="M2.3 12.3 C1.4 11.9 0.8 11.1 0.8 10 V3.2 C0.8 1.7 1.8 0.7 3.3 0.7 H8.8 C9.9 0.7 10.7 1.3 11.1 2.3"/><rect x="3.7" y="3.3" width="9.9" height="13" rx="2.7"/><path d="M6.5 7.6 H8.3 M6.5 10.3 H10.7 M6.5 12.8 H10.7" stroke-width="1"/></svg>
<svg class="abs" style="left:1623.5px;top:434.64px" width="4" height="13" viewBox="0 0 4 13" fill="#333"><circle cx="2" cy="2" r="1"/><circle cx="2" cy="6.3" r="1"/><circle cx="2" cy="10.6" r="1"/></svg>
<div class="abs" style="left:260px;top:484.72px;width:1380px;height:1px;background:#e6e6e6"></div>
<div class="abs" style="left:266px;top:462.72px;width:14px;height:14px;border:1px solid #c8c8c8;border-radius:3px;background:#fff"></div>
<div class="t" style="left:288px;width:42px;top:462.22px;text-align:center;font-size:11px;color:#333;line-height:15px">10</div>
<div class="abs" style="left:342px;top:462.72px;width:1px;height:22px;border-left:1px dotted #999"></div>
<div class="abs" style="left:344px;top:475.22px;width:8px;height:1px;border-top:1px dotted #b4b4b4"></div>
<div class="t" style="left:356.5px;top:462.22px;font-size:11px;color:#333;line-height:15px">100</div>
<div class="t" style="left:485.5px;top:462.22px;font-size:11px;color:#333;line-height:15px">Máy in</div>
<div class="t" style="left:599.5px;top:462.22px;font-size:11px;color:#333;line-height:15px">Máy in</div>
<div class="t" style="left:771px;top:462.22px;font-size:11px;color:#333;line-height:15px">Văn phòng</div>
<div class="t" style="left:934px;width:93.5px;text-align:right;top:462.22px;font-size:11px;color:#333;line-height:15px">1</div>
<div class="t" style="left:1037px;width:127.5px;text-align:right;top:462.22px;font-size:11px;color:#333;line-height:15px">12.000.000</div>
<div class="t" style="left:1174px;width:162.5px;text-align:right;top:462.22px;font-size:11px;color:#333;line-height:15px">0</div>
<div class="t" style="left:1346px;width:127.5px;text-align:right;top:462.22px;font-size:11px;color:#333;line-height:15px">12.000.000</div>
<div class="abs" style="left:1483px;top:454.72px;width:69px;height:30px;overflow:hidden"><div class="t" style="left:34px;top:7.5px;font-size:11px;color:#333;line-height:15px;letter-spacing:0.75px">19/08/</div></div>
<svg class="abs" style="left:1564px;top:463.92px" width="14" height="14" viewBox="0 0 14 14" fill="none" stroke="#4a6cf0" stroke-width="1.25" stroke-linejoin="round" stroke-linecap="round"><path d="M2.9 7.3 C1.7 7.9 1.3 8.7 1.3 10 C1.3 11.7 2.1 12.5 3.7 12.5 H10.3 C11.9 12.5 12.5 11.7 12.5 10 C12.5 8.9 12.2 8.3 11.6 7.9"/><path d="M4.6 9.9 L5.2 7.5 L10.6 2.1 L12.4 3.9 L7 9.3 Z"/></svg>
<svg class="abs" style="left:1591.5px;top:462.42px" width="15" height="17" viewBox="0 0 15 17" fill="none" stroke="#555" stroke-width="1.15"><path d="M2.3 12.3 C1.4 11.9 0.8 11.1 0.8 10 V3.2 C0.8 1.7 1.8 0.7 3.3 0.7 H8.8 C9.9 0.7 10.7 1.3 11.1 2.3"/><rect x="3.7" y="3.3" width="9.9" height="13" rx="2.7"/><path d="M6.5 7.6 H8.3 M6.5 10.3 H10.7 M6.5 12.8 H10.7" stroke-width="1"/></svg>
<svg class="abs" style="left:1623.5px;top:464.72px" width="4" height="13" viewBox="0 0 4 13" fill="#333"><circle cx="2" cy="2" r="1"/><circle cx="2" cy="6.3" r="1"/><circle cx="2" cy="10.6" r="1"/></svg>
<div class="abs" style="left:260px;top:514.8px;width:1380px;height:1px;background:#e6e6e6"></div>
<div class="abs" style="left:266px;top:492.8px;width:14px;height:14px;border:1px solid #c8c8c8;border-radius:3px;background:#fff"></div>
<div class="t" style="left:288px;width:42px;top:492.3px;text-align:center;font-size:11px;color:#333;line-height:15px">11</div>
<div class="abs" style="left:342px;top:492.8px;width:1px;height:22px;border-left:1px dotted #999"></div>
<div class="abs" style="left:344px;top:505.3px;width:8px;height:1px;border-top:1px dotted #b4b4b4"></div>
<div class="t" style="left:356.5px;top:492.3px;font-size:11px;color:#333;line-height:15px">99</div>
<div class="t" style="left:485.5px;top:492.3px;font-size:11px;color:#333;line-height:15px">Máy vi tính để bàn</div>
<div class="t" style="left:599.5px;top:492.3px;font-size:11px;color:#333;line-height:15px">Máy vi tính để bàn</div>
<div class="t" style="left:771px;top:492.3px;font-size:11px;color:#333;line-height:15px">Bộ phận A</div>
<div class="t" style="left:934px;width:93.5px;text-align:right;top:492.3px;font-size:11px;color:#333;line-height:15px">1</div>
<div class="t" style="left:1037px;width:127.5px;text-align:right;top:492.3px;font-size:11px;color:#333;line-height:15px">12.500.000</div>
<div class="t" style="left:1174px;width:162.5px;text-align:right;top:492.3px;font-size:11px;color:#333;line-height:15px">0</div>
<div class="t" style="left:1346px;width:127.5px;text-align:right;top:492.3px;font-size:11px;color:#333;line-height:15px">12.500.000</div>
<div class="abs" style="left:1483px;top:484.8px;width:69px;height:30px;overflow:hidden"><div class="t" style="left:34px;top:7.5px;font-size:11px;color:#333;line-height:15px;letter-spacing:0.75px">19/08/</div></div>
<svg class="abs" style="left:1564px;top:494.0px" width="14" height="14" viewBox="0 0 14 14" fill="none" stroke="#4a6cf0" stroke-width="1.25" stroke-linejoin="round" stroke-linecap="round"><path d="M2.9 7.3 C1.7 7.9 1.3 8.7 1.3 10 C1.3 11.7 2.1 12.5 3.7 12.5 H10.3 C11.9 12.5 12.5 11.7 12.5 10 C12.5 8.9 12.2 8.3 11.6 7.9"/><path d="M4.6 9.9 L5.2 7.5 L10.6 2.1 L12.4 3.9 L7 9.3 Z"/></svg>
<svg class="abs" style="left:1591.5px;top:492.5px" width="15" height="17" viewBox="0 0 15 17" fill="none" stroke="#555" stroke-width="1.15"><path d="M2.3 12.3 C1.4 11.9 0.8 11.1 0.8 10 V3.2 C0.8 1.7 1.8 0.7 3.3 0.7 H8.8 C9.9 0.7 10.7 1.3 11.1 2.3"/><rect x="3.7" y="3.3" width="9.9" height="13" rx="2.7"/><path d="M6.5 7.6 H8.3 M6.5 10.3 H10.7 M6.5 12.8 H10.7" stroke-width="1"/></svg>
<svg class="abs" style="left:1623.5px;top:494.8px" width="4" height="13" viewBox="0 0 4 13" fill="#333"><circle cx="2" cy="2" r="1"/><circle cx="2" cy="6.3" r="1"/><circle cx="2" cy="10.6" r="1"/></svg>
<div class="abs" style="left:260px;top:544.88px;width:1380px;height:1px;background:#e6e6e6"></div>
<div class="abs" style="left:266px;top:522.88px;width:14px;height:14px;border:1px solid #c8c8c8;border-radius:3px;background:#fff"></div>
<div class="t" style="left:288px;width:42px;top:522.38px;text-align:center;font-size:11px;color:#333;line-height:15px">12</div>
<div class="abs" style="left:342px;top:522.88px;width:1px;height:22px;border-left:1px dotted #999"></div>
<div class="abs" style="left:344px;top:535.38px;width:8px;height:1px;border-top:1px dotted #b4b4b4"></div>
<div class="t" style="left:356.5px;top:522.38px;font-size:11px;color:#333;line-height:15px">MVTKBYC001</div>
<div class="t" style="left:485.5px;top:522.38px;font-size:11px;color:#333;line-height:15px">Máy vi tính KBYC00<span style="letter-spacing:-0.9px">...</span></div>
<div class="t" style="left:599.5px;top:522.38px;font-size:11px;color:#333;line-height:15px">Máy móc, thiết bị chuyên dùng <span style="letter-spacing:-0.9px">...</span></div>
<div class="t" style="left:771px;top:522.38px;font-size:11px;color:#333;line-height:15px">Phòng CNTT</div>
<div class="t" style="left:934px;width:93.5px;text-align:right;top:522.38px;font-size:11px;color:#333;line-height:15px">1</div>
<div class="t" style="left:1037px;width:127.5px;text-align:right;top:522.38px;font-size:11px;color:#333;line-height:15px">61.816.000</div>
<div class="t" style="left:1174px;width:162.5px;text-align:right;top:522.38px;font-size:11px;color:#333;line-height:15px">61.816.000</div>
<div class="t" style="left:1346px;width:127.5px;text-align:right;top:522.38px;font-size:11px;color:#333;line-height:15px">0</div>
<div class="abs" style="left:1483px;top:514.88px;width:69px;height:30px;overflow:hidden"><div class="t" style="left:34px;top:7.5px;font-size:11px;color:#333;line-height:15px;letter-spacing:0.75px">14/08/</div></div>
<svg class="abs" style="left:1564px;top:524.08px" width="14" height="14" viewBox="0 0 14 14" fill="none" stroke="#4a6cf0" stroke-width="1.25" stroke-linejoin="round" stroke-linecap="round"><path d="M2.9 7.3 C1.7 7.9 1.3 8.7 1.3 10 C1.3 11.7 2.1 12.5 3.7 12.5 H10.3 C11.9 12.5 12.5 11.7 12.5 10 C12.5 8.9 12.2 8.3 11.6 7.9"/><path d="M4.6 9.9 L5.2 7.5 L10.6 2.1 L12.4 3.9 L7 9.3 Z"/></svg>
<svg class="abs" style="left:1591.5px;top:522.58px" width="15" height="17" viewBox="0 0 15 17" fill="none" stroke="#555" stroke-width="1.15"><path d="M2.3 12.3 C1.4 11.9 0.8 11.1 0.8 10 V3.2 C0.8 1.7 1.8 0.7 3.3 0.7 H8.8 C9.9 0.7 10.7 1.3 11.1 2.3"/><rect x="3.7" y="3.3" width="9.9" height="13" rx="2.7"/><path d="M6.5 7.6 H8.3 M6.5 10.3 H10.7 M6.5 12.8 H10.7" stroke-width="1"/></svg>
<svg class="abs" style="left:1623.5px;top:524.88px" width="4" height="13" viewBox="0 0 4 13" fill="#333"><circle cx="2" cy="2" r="1"/><circle cx="2" cy="6.3" r="1"/><circle cx="2" cy="10.6" r="1"/></svg>
<div class="abs" style="left:260px;top:574.96px;width:1380px;height:1px;background:#e6e6e6"></div>
<div class="abs" style="left:266px;top:552.96px;width:14px;height:14px;border:1px solid #c8c8c8;border-radius:3px;background:#fff"></div>
<div class="t" style="left:288px;width:42px;top:552.46px;text-align:center;font-size:11px;color:#333;line-height:15px">13</div>
<div class="abs" style="left:342px;top:552.96px;width:1px;height:22px;border-left:1px dotted #999"></div>
<div class="abs" style="left:344px;top:565.46px;width:8px;height:1px;border-top:1px dotted #b4b4b4"></div>
<div class="t" style="left:356.5px;top:552.46px;font-size:11px;color:#333;line-height:15px">TS000003</div>
<div class="t" style="left:485.5px;top:552.46px;font-size:11px;color:#333;line-height:15px">Ô tô cấp cứu 16A-0<span style="letter-spacing:-0.9px">...</span></div>
<div class="t" style="left:599.5px;top:552.46px;font-size:11px;color:#333;line-height:15px">Máy móc, thiết bị chuyên dùng <span style="letter-spacing:-0.9px">...</span></div>
<div class="t" style="left:771px;top:552.46px;font-size:11px;color:#333;line-height:15px">Bộ phận A</div>
<div class="t" style="left:934px;width:93.5px;text-align:right;top:552.46px;font-size:11px;color:#333;line-height:15px">1</div>
<div class="t" style="left:1037px;width:127.5px;text-align:right;top:552.46px;font-size:11px;color:#333;line-height:15px">700.000.000</div>
<div class="t" style="left:1174px;width:162.5px;text-align:right;top:552.46px;font-size:11px;color:#333;line-height:15px">700.000.000</div>
<div class="t" style="left:1346px;width:127.5px;text-align:right;top:552.46px;font-size:11px;color:#333;line-height:15px">0</div>
<div class="abs" style="left:1483px;top:544.96px;width:69px;height:30px;overflow:hidden"><div class="t" style="left:34px;top:7.5px;font-size:11px;color:#333;line-height:15px;letter-spacing:0.75px">01/01/</div></div>
<svg class="abs" style="left:1564px;top:554.1600000000001px" width="14" height="14" viewBox="0 0 14 14" fill="none" stroke="#4a6cf0" stroke-width="1.25" stroke-linejoin="round" stroke-linecap="round"><path d="M2.9 7.3 C1.7 7.9 1.3 8.7 1.3 10 C1.3 11.7 2.1 12.5 3.7 12.5 H10.3 C11.9 12.5 12.5 11.7 12.5 10 C12.5 8.9 12.2 8.3 11.6 7.9"/><path d="M4.6 9.9 L5.2 7.5 L10.6 2.1 L12.4 3.9 L7 9.3 Z"/></svg>
<svg class="abs" style="left:1591.5px;top:552.6600000000001px" width="15" height="17" viewBox="0 0 15 17" fill="none" stroke="#555" stroke-width="1.15"><path d="M2.3 12.3 C1.4 11.9 0.8 11.1 0.8 10 V3.2 C0.8 1.7 1.8 0.7 3.3 0.7 H8.8 C9.9 0.7 10.7 1.3 11.1 2.3"/><rect x="3.7" y="3.3" width="9.9" height="13" rx="2.7"/><path d="M6.5 7.6 H8.3 M6.5 10.3 H10.7 M6.5 12.8 H10.7" stroke-width="1"/></svg>
<svg class="abs" style="left:1623.5px;top:554.96px" width="4" height="13" viewBox="0 0 4 13" fill="#333"><circle cx="2" cy="2" r="1"/><circle cx="2" cy="6.3" r="1"/><circle cx="2" cy="10.6" r="1"/></svg>
<div class="abs" style="left:260px;top:575px;width:1386px;height:30px;background:#f2f2f2"></div>
<div class="abs" style="left:287px;top:575px;width:1px;height:30px;background:#e6e6e6"></div>
<div class="abs" style="left:330px;top:575px;width:1px;height:30px;background:#e6e6e6"></div>
<div class="abs" style="left:476px;top:575px;width:1px;height:30px;background:#e6e6e6"></div>
<div class="abs" style="left:590px;top:575px;width:1px;height:30px;background:#e6e6e6"></div>
<div class="abs" style="left:761px;top:575px;width:1px;height:30px;background:#e6e6e6"></div>
<div class="abs" style="left:933px;top:575px;width:1px;height:30px;background:#e6e6e6"></div>
<div class="abs" style="left:1036px;top:575px;width:1px;height:30px;background:#e6e6e6"></div>
<div class="abs" style="left:1173px;top:575px;width:1px;height:30px;background:#e6e6e6"></div>
<div class="abs" style="left:1345px;top:575px;width:1px;height:30px;background:#e6e6e6"></div>
<div class="abs" style="left:1482px;top:575px;width:1px;height:30px;background:#e6e6e6"></div>
<div class="abs" style="left:1552px;top:575px;width:1px;height:30px;background:#e6e6e6"></div>
<div class="abs" style="left:1552px;top:575px;width:1px;height:30px;background:#e6e6e6"></div>
<div class="t" style="left:934px;width:93.5px;text-align:right;top:582px;font-size:11px;font-weight:700;color:#333;line-height:15px;letter-spacing:0.25px">36</div>
<div class="t" style="left:1037px;width:127.5px;text-align:right;top:582px;font-size:11px;font-weight:700;color:#333;line-height:15px;letter-spacing:0.25px">542.940.032.000</div>
<div class="t" style="left:1174px;width:162.5px;text-align:right;top:582px;font-size:11px;font-weight:700;color:#333;line-height:15px;letter-spacing:0.25px">7.863.976.000</div>
<div class="t" style="left:1346px;width:127.5px;text-align:right;top:582px;font-size:11px;font-weight:700;color:#333;line-height:15px;letter-spacing:0.25px">535.076.056.000</div>
<div class="abs" style="left:1640px;top:184px;width:6px;height:391px;background:#dcdcdc"></div>
<div class="abs" style="left:260px;top:605px;width:1386px;height:6px;background:#f0f0f0"></div>
<div class="abs" style="left:260px;top:605px;width:1080px;height:6px;background:#d3d3d3;border-radius:0 3px 3px 0"></div>
<div class="abs" style="left:260px;top:611px;width:1386px;height:32px;background:#fafbfc"></div>
<div class="t" style="left:268.5px;top:620px;font-size:11px;color:#333;line-height:15px">Tổng số: <b>36</b> bản ghi</div>
<div class="abs" style="left:260px;top:643px;width:1386px;height:1px;background:#b7b9b9"></div>
<div class="abs" style="left:260px;top:644px;width:1386px;height:1px;background:#f6f6f6"></div>
<div class="abs" style="left:260px;top:645px;width:1386px;height:1px;background:#d9d9d9"></div>
<div class="abs" style="left:260px;top:646px;width:1386px;height:1px;background:#eeeeee"></div>
<div class="t" style="left:1401px;top:620px;font-size:11px;color:#333;line-height:15px">Số dòng/trang</div>
<div class="t" style="left:1482px;top:620px;font-size:11px;color:#222;line-height:15px">20</div>
<svg class="abs" style="left:1504px;top:624px" width="9" height="7" viewBox="0 0 9 7"><path d="M1 1.5 L4.5 5 L8 1.5" fill="none" stroke="#222" stroke-width="1.6"/></svg>
<div class="t" style="left:1541px;top:620px;font-size:10px;color:#888;line-height:15px">&lt;</div>
<div class="t" style="left:1556px;top:620px;font-size:11px;color:#333;line-height:15px">Trang</div>
<div class="t" style="left:1597.5px;top:620px;font-size:11px;color:#222;line-height:15px;-webkit-text-stroke:0.35px #222">1</div>
<div class="t" style="left:1612.5px;top:620px;font-size:11px;color:#333;line-height:15px">2</div>
<div class="t" style="left:1631px;top:620px;font-size:10px;color:#333;line-height:15px">&gt;</div>
<div class="t" style="left:273px;top:651px;font-size:11.2px;color:#3656e8;line-height:15px;-webkit-text-stroke:0.2px #3656e8">Lịch sử biến động</div>
<div class="abs" style="left:273px;top:672px;width:89px;height:2px;background:#3557ee"></div>
<div class="t" style="left:389.5px;top:651px;font-size:11px;color:#222;line-height:15px">Thông tin kê khai</div>
<div class="t" style="left:501.5px;top:651px;font-size:11px;color:#222;line-height:15px">Tệp đính kèm</div>
<div class="abs" style="left:260px;top:675px;width:1386px;height:30px;background:#f4f4f4"></div>
<div class="abs" style="left:310px;top:675px;width:1px;height:30px;background:#e6e6e6"></div>
<div class="t" style="left:260px;width:50px;text-align:center;top:682px;font-size:10.7px;font-weight:700;color:#333;line-height:15px">STT</div>
<div class="abs" style="left:413px;top:675px;width:1px;height:30px;background:#e6e6e6"></div>
<div class="t" style="left:319.5px;top:682px;font-size:10.7px;font-weight:700;color:#333;line-height:15px">Số chứng từ</div>
<div class="abs" style="left:542px;top:675px;width:1px;height:30px;background:#e6e6e6"></div>
<div class="t" style="left:414px;width:128px;text-align:center;top:682px;font-size:10.7px;font-weight:700;color:#333;line-height:15px">Ngày chứng từ</div>
<div class="abs" style="left:670px;top:675px;width:1px;height:30px;background:#e6e6e6"></div>
<div class="t" style="left:543px;width:127px;text-align:center;top:682px;font-size:10.7px;font-weight:700;color:#333;line-height:15px">Ngày biến động</div>
<div class="abs" style="left:923px;top:675px;width:1px;height:30px;background:#e6e6e6"></div>
<div class="t" style="left:679.5px;top:682px;font-size:10.7px;font-weight:700;color:#333;line-height:15px">Nội dung</div>
<div class="abs" style="left:1051px;top:675px;width:1px;height:30px;background:#e6e6e6"></div>
<div class="t" style="left:924px;width:118.5px;text-align:right;top:682px;font-size:10.7px;font-weight:700;color:#333;line-height:15px">Nguyên giá</div>
<div class="abs" style="left:1180px;top:675px;width:1px;height:30px;background:#e6e6e6"></div>
<div class="t" style="left:1052px;width:119.5px;text-align:right;top:682px;font-size:10.7px;font-weight:700;color:#333;line-height:15px">Số tiền thực hiện</div>
<div class="t" style="left:1231px;top:682px;font-size:10.7px;font-weight:700;color:#333;line-height:15px">Giá trị HM/KH lũy kế</div>
<div class="abs" style="left:934px;top:708px;width:37px;height:37px;border-radius:19px;background:#f1f3fb"></div>
<svg class="abs" style="left:936px;top:713px" width="34" height="29" viewBox="0 0 34 29"><path d="M1 3 C1 1.8 1.8 1 3 1 H12 L15 4 H31 C32.2 4 33 4.8 33 6 V8 H1Z" fill="#3355e6"/><path d="M1 26 C1 27.2 1.8 28 3 28 H31 C32.2 28 33 27.2 33 26 V9 C33 7.8 32.2 7 31 7 H17 L14.5 9.5 H1Z" fill="#8fa2f5"/></svg>
<div class="t" style="left:911.5px;top:752.5px;font-size:11px;color:#666;line-height:15px">Không có dữ liệu</div>
<div class="abs" style="left:226px;top:751px;width:20px;height:20px;border-radius:10px;background:#2d50e6"></div>
<svg class="abs" style="left:232px;top:756px" width="8" height="10" viewBox="0 0 8 10"><path d="M2.5 1.5 L6 5 L2.5 8.5" fill="none" stroke="#fff" stroke-width="1.3"/></svg>
<div class="abs" style="left:1301px;top:653px;width:344px;height:120px;background:#fff;box-shadow:0 2px 9px rgba(0,0,0,0.24);border-left:7px solid #dde2fb"></div>
<svg class="abs" style="left:1323px;top:667px" width="18" height="18" viewBox="0 0 18 18"><path d="M9.5 1 A7.8 7.5 0 1 1 5 15.2 L1.2 16.8 L2.6 13.6 A7.8 7.5 0 0 1 9.5 1Z" fill="#2d50e6"/><path d="M6.3 7.2 H13 M6.3 10.2 H9.8" stroke="#fff" stroke-width="1.6" stroke-linecap="round"/></svg>
<div class="t" style="left:1351px;top:666px;font-size:11px;color:#3a5ae8;line-height:15px;-webkit-text-stroke:0.2px #3a5ae8">Cập nhật Thông tư 23/2023/TT-BTC</div>
<svg class="abs" style="left:1611.5px;top:669px" width="14" height="14" viewBox="0 0 14 14"><path d="M1 1 L13 13 M13 1 L1 13" stroke="#333" stroke-width="1.7"/></svg>
<div class="t" style="left:1351px;top:688px;font-size:9.9px;color:#666;line-height:15.5px">Đơn vị hiện có <b style="color:#555">5</b> tài sản có <b style="color:#555">Đơn giá = Nguyên giá/Số</b><br><b style="color:#555">lượng</b> &lt; 30 triệu cần được chuyển thành CCDC.</div>
<div class="abs" style="left:1351px;top:734px;width:164px;height:27px;background:#2d50e6;border-radius:3px"></div>
<div class="t" style="left:1351px;width:164px;text-align:center;top:739px;font-size:10.2px;font-weight:700;color:#fff;line-height:15px">Chuyển tài sản thành CCDC</div>
<div class="abs" style="left:1522px;top:734px;width:55px;height:27px;background:#fff;border:1px solid #d4d4d4;border-radius:3px"></div>
<div class="t" style="left:1522px;width:55px;text-align:center;top:739px;font-size:10.5px;font-weight:700;color:#333;line-height:15px">Đóng</div>
<div class="abs" style="left:1646px;top:271px;width:14px;height:14px;background:#2d50e6;border-radius:2px 0 0 2px"></div>
<svg class="abs" style="left:1650px;top:274px" width="7" height="9" viewBox="0 0 7 9"><path d="M1.8 1.2 L5 4.5 L1.8 7.8" fill="none" stroke="#fff" stroke-width="1.4"/></svg>
<div class="abs" style="left:1612px;top:289px;width:48px;height:170px;background:#fff;border-radius:8px 0 0 8px;box-shadow:0 0 4px rgba(0,0,0,0.08)"></div>
<svg class="abs" style="left:1618px;top:295px" width="36" height="36" viewBox="0 0 36 36"><circle cx="18" cy="18" r="17.5" fill="#2d50e6"/><path d="M16.9 12.9 L22.6 18.6 L18 21 L14.6 17.6 Z" fill="#fff"/><path d="M16.8 11.6 L23.8 18.6" stroke="#fff" stroke-width="1.5" stroke-linecap="round"/><ellipse cx="13.9" cy="20.6" rx="2.2" ry="1.9" transform="rotate(-45 13.9 20.6)" fill="#fff"/><path d="M17.4 21.9 L19.2 23.8" stroke="#fff" stroke-width="2.3" stroke-linecap="round"/><path d="M20.3 10.6 L21.4 9.4 M22.7 13.2 L24.1 12.7 M21.7 11.8 L23.1 10.7" stroke="#fff" stroke-width="0.9" stroke-linecap="round"/></svg>
<svg class="abs" style="left:1618px;top:336px" width="36" height="36" viewBox="0 0 36 36"><defs><linearGradient id="gg" x1="0" y1="0" x2="0" y2="1"><stop offset="0" stop-color="#22d383"/><stop offset="1" stop-color="#15ab68"/></linearGradient></defs><circle cx="17.6" cy="17.8" r="17.2" fill="url(#gg)"/><ellipse cx="17.4" cy="17.7" rx="10.9" ry="10" fill="#fff"/><path d="M17.3 11.4 A6.4 6.4 0 1 0 21.9 22.4 L24 23.9 L23 21.2 A6.4 6.4 0 0 0 17.3 11.4Z" fill="#1cc176"/><circle cx="15.3" cy="17.7" r="1.15" fill="#fff"/><circle cx="19.9" cy="17.7" r="1.15" fill="#fff"/></svg>
<svg class="abs" style="left:1614px;top:373px" width="46" height="44" viewBox="0 0 46 44"><circle cx="22" cy="21.5" r="20.8" fill="#dfe6f5"/><circle cx="24.6" cy="21.8" r="18.6" fill="#2348dd"/><path d="M8 21.8 A18.6 18.6 0 0 1 24.6 3.2 A17 17 0 0 0 10.5 21.8 A17 17 0 0 0 24.6 40.4 A18.6 18.6 0 0 1 8 21.8Z" fill="#1a3cc9"/><circle cx="16" cy="15" r="3.6" fill="#d6e2fb"/><circle cx="36.4" cy="15" r="3.6" fill="#d6e2fb"/><ellipse cx="26.2" cy="22.2" rx="12.1" ry="9" fill="#fff"/><rect x="17.3" y="18.4" width="17.6" height="10.2" rx="5.1" fill="#0e1e7c"/><circle cx="22.1" cy="23" r="1.9" fill="#b4c8f2"/><circle cx="30.4" cy="23" r="1.9" fill="#b4c8f2"/><rect x="25.3" y="26.4" width="2" height="1.1" fill="#c9d6f5"/></svg>
<svg class="abs" style="left:1618px;top:418px" width="36" height="36" viewBox="0 0 36 36"><circle cx="17.8" cy="17.8" r="17.3" fill="#2d50e6"/><circle cx="17.7" cy="13.3" r="2.9" fill="#fff"/><circle cx="11.3" cy="13.5" r="2.4" fill="#fff"/><circle cx="24.2" cy="13.5" r="2.4" fill="#fff"/><path d="M13.1 23.4 V21.6 C13.1 19.3 15 17.9 17.7 17.9 C20.4 17.9 22.3 19.3 22.3 21.6 V23.4 C22.3 24.3 21.8 24.8 20.9 24.8 H14.5 C13.6 24.8 13.1 24.3 13.1 23.4Z" fill="#fff"/><path d="M8.3 21.2 V19.9 C8.3 18.3 9.3 17.4 10.9 17.4 H12.6 C11.8 18.3 11.4 19.4 11.4 20.6 V22.2 H9.3 C8.7 22.2 8.3 21.8 8.3 21.2Z" fill="#fff"/><path d="M27.2 21.2 V19.9 C27.2 18.3 26.2 17.4 24.6 17.4 H22.9 C23.7 18.3 24.1 19.4 24.1 20.6 V22.2 H26.2 C26.8 22.2 27.2 21.8 27.2 21.2Z" fill="#fff"/></svg>
<div class="abs" style="left:1616.1px;top:416.1px;width:11.6px;height:11.6px;border-radius:6px;background:#f6a300"></div>
<div class="abs" style="left:1425px;top:381px;width:188px;height:31px;background:#595959;border-radius:4px"></div>
<svg class="abs" style="left:1612px;top:391px" width="5" height="10" viewBox="0 0 5 10"><path d="M0 0 L5 5 L0 10Z" fill="#595959"/></svg>
<div class="t" style="left:1431.5px;top:389px;font-size:11px;color:#fff;line-height:15px">Trợ lý số MISA AVA sẵn sàng hỗ trợ</div>
</body></html>
